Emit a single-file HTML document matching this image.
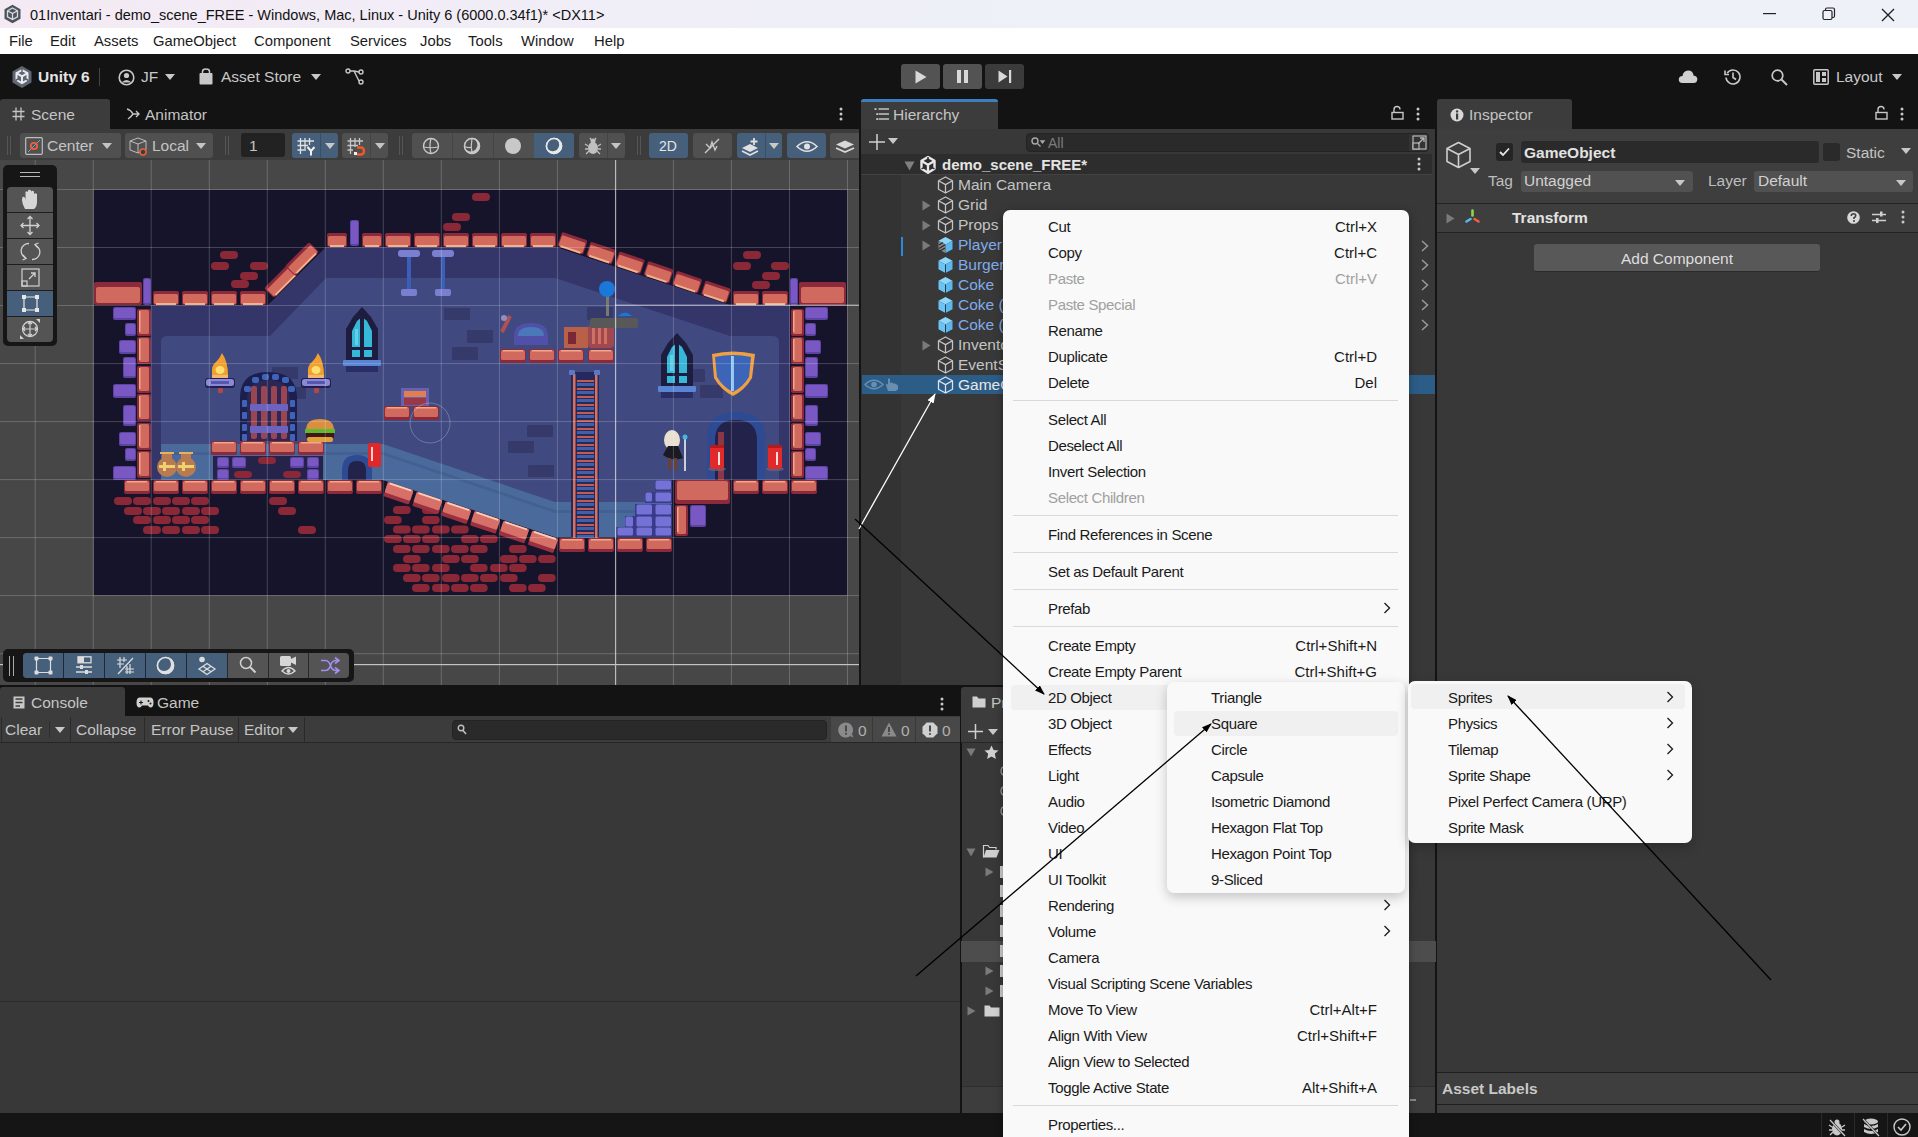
<!DOCTYPE html>
<html><head><meta charset="utf-8">
<style>
*{box-sizing:border-box;margin:0;padding:0}
html,body{width:1918px;height:1137px;overflow:hidden;background:#131313;font-family:"Liberation Sans",sans-serif;}
.a{position:absolute}
.t{position:absolute;white-space:nowrap;line-height:1}
svg{position:absolute;overflow:visible}
#title{left:0;top:0;width:1918px;height:28px;background:linear-gradient(90deg,#f4eaf4 0%,#f1edf6 25%,#eef0f7 50%,#eef2f8 100%)}
#menubar{left:0;top:28px;width:1918px;height:26px;background:#fff}
#toolbar{left:0;top:54px;width:1918px;height:44px;background:#131313}
.mtxt{font-size:14.8px;color:#1b1b1b}
.ltxt{color:#c4c4c4;font-size:15.5px}
.btn{position:absolute;background:#585858;border-radius:3px}
.bb{position:absolute;background:#46607c;}
.bg{position:absolute;background:#515151;}
.cm{position:absolute;font-size:15px;letter-spacing:-0.35px;color:#1a1a1a;white-space:nowrap;line-height:1;margin-top:1px}

.sc{position:absolute;font-size:15px;color:#1a1a1a;white-space:nowrap;line-height:1;text-align:right;margin-top:1px}
.sep{position:absolute;height:1px;background:#d9d9d9}
.cm.cmd,.sc.cmd{color:#a0a0a0}
.hrow{position:absolute;font-size:15.5px;color:#d2d2d2;white-space:nowrap;line-height:1}
.hb{color:#7cc3f5}
</style></head><body>

<!-- TITLE BAR -->
<div id="title" class="a"></div>
<div class="t" style="left:30px;top:8px;font-size:14.5px;color:#111">01Inventari - demo_scene_FREE - Windows, Mac, Linux - Unity 6 (6000.0.34f1)* &lt;DX11&gt;</div>
<svg style="left:3px;top:4px" width="19" height="20" viewBox="0 0 19 20"><path d="M9.5 0.8 L17.5 5.3 V14.7 L9.5 19.2 L1.5 14.7 V5.3Z" fill="#4d535c"/><path d="M9.5 4 L14.5 6.8 V12.8 L9.5 15.6 L4.5 12.8 V6.8Z M4.5 6.8 L9.5 9.6 L14.5 6.8 M9.5 9.6 V15.6" fill="none" stroke="#d8dce2" stroke-width="1.3"/></svg>
<svg style="left:1763px;top:13px" width="14" height="2"><rect width="13" height="1.2" fill="#222"/></svg>
<svg style="left:1822px;top:7px" width="14" height="14" viewBox="0 0 14 14"><rect x="1" y="3.5" width="9" height="9" rx="1.5" fill="none" stroke="#222" stroke-width="1.2"/><path d="M3.5 3.5 V2.5 Q3.5 1 5 1 H11 Q12.5 1 12.5 2.5 V9 Q12.5 10.5 11 10.5 H10" fill="none" stroke="#222" stroke-width="1.2"/></svg>
<svg style="left:1881px;top:8px" width="14" height="14" viewBox="0 0 14 14"><path d="M1 1 L13 13 M13 1 L1 13" stroke="#222" stroke-width="1.4"/></svg>

<!-- MENU BAR -->
<div id="menubar" class="a"></div>
<div class="t mtxt" style="left:9px;top:34px">File</div>
<div class="t mtxt" style="left:50px;top:34px">Edit</div>
<div class="t mtxt" style="left:94px;top:34px">Assets</div>
<div class="t mtxt" style="left:153px;top:34px">GameObject</div>
<div class="t mtxt" style="left:254px;top:34px">Component</div>
<div class="t mtxt" style="left:350px;top:34px">Services</div>
<div class="t mtxt" style="left:420px;top:34px">Jobs</div>
<div class="t mtxt" style="left:468px;top:34px">Tools</div>
<div class="t mtxt" style="left:521px;top:34px">Window</div>
<div class="t mtxt" style="left:594px;top:34px">Help</div>

<!-- MAIN TOOLBAR -->
<div id="toolbar" class="a"></div>


<!-- MAIN TOOLBAR CONTENT -->
<svg style="left:11px;top:65px" width="22" height="24" viewBox="0 0 22 24"><path d="M11 1 L20.5 6.5 V17.5 L11 23 L1.5 17.5 V6.5Z" fill="#5e6570"/><path d="M11 5 L16.5 8.2 V15 L11 18.2 L5.5 15 V8.2Z M5.5 8.2 L11 11.4 L16.5 8.2 M11 11.4 V18.2" fill="none" stroke="#e8ebef" stroke-width="2" stroke-linejoin="round"/><path d="M11 4 V7 M4.5 15.5 L7 14 M17.5 15.5 L15 14" stroke="#5e6570" stroke-width="1.5"/></svg>
<div class="t" style="left:38px;top:69px;font-size:15.5px;font-weight:bold;color:#e4e4e4">Unity 6</div>
<div class="a" style="left:99px;top:68px;width:1px;height:18px;background:#444"></div>
<svg style="left:118px;top:69px" width="17" height="17" viewBox="0 0 17 17"><circle cx="8.5" cy="8.5" r="7.3" fill="none" stroke="#c8c8c8" stroke-width="1.6"/><circle cx="8.5" cy="6.5" r="2.6" fill="#c8c8c8"/><path d="M3.5 13.5 Q8.5 8.5 13.5 13.5" fill="#c8c8c8"/></svg>
<div class="t" style="left:141px;top:69px;font-size:15.5px;color:#c8c8c8">JF</div>
<svg style="left:165px;top:74px" width="10" height="6"><path d="M0 0 H10 L5 6Z" fill="#c8c8c8"/></svg>
<svg style="left:199px;top:68px" width="14" height="17" viewBox="0 0 14 17"><rect x="0.5" y="5" width="13" height="11.5" rx="1" fill="#c8c8c8"/><path d="M3.5 6 V3.5 Q3.5 1 7 1 Q10.5 1 10.5 3.5 V6" fill="none" stroke="#c8c8c8" stroke-width="1.5"/></svg>
<div class="t" style="left:221px;top:69px;font-size:15.5px;color:#c8c8c8">Asset Store</div>
<svg style="left:311px;top:74px" width="10" height="6"><path d="M0 0 H10 L5 6Z" fill="#c8c8c8"/></svg>
<svg style="left:345px;top:68px" width="19" height="17" viewBox="0 0 19 17"><circle cx="3" cy="3" r="2" fill="none" stroke="#c8c8c8" stroke-width="1.4"/><circle cx="16" cy="4" r="2" fill="none" stroke="#c8c8c8" stroke-width="1.4"/><circle cx="16" cy="14" r="2" fill="none" stroke="#c8c8c8" stroke-width="1.4"/><path d="M5 3 H9 L14 4 M9 3 L14 13" fill="none" stroke="#c8c8c8" stroke-width="1.4"/></svg>

<div class="btn" style="left:901px;top:64px;width:39px;height:25px;background:#535353"></div>
<div class="btn" style="left:943px;top:64px;width:39px;height:25px;background:#535353"></div>
<div class="btn" style="left:985px;top:64px;width:39px;height:25px;background:#3b3b3b"></div>
<svg style="left:915px;top:70px" width="12" height="14"><path d="M0.5 0.5 L11.5 7 L0.5 13.5Z" fill="#d8d8d8"/></svg>
<svg style="left:957px;top:70px" width="12" height="13"><rect x="0" y="0" width="4" height="13" fill="#d8d8d8"/><rect x="7" y="0" width="4" height="13" fill="#d8d8d8"/></svg>
<svg style="left:998px;top:70px" width="14" height="13"><path d="M0.5 0.5 L9.5 6.5 L0.5 12.5Z" fill="#d8d8d8"/><rect x="11" y="0" width="2.2" height="13" fill="#d8d8d8"/></svg>

<svg style="left:1678px;top:69px" width="20" height="15" viewBox="0 0 20 15"><path d="M4.5 14 Q0.5 14 0.8 10 Q1.2 7 4.5 7 Q5 2 10 1.5 Q15 1.5 15.5 6.5 Q19.5 7 19.3 10.5 Q19 14 15.5 14Z" fill="#d0d0d0"/></svg>
<svg style="left:1724px;top:68px" width="18" height="18" viewBox="0 0 18 18"><path d="M3.2 5 A7 7 0 1 1 2 9.5" fill="none" stroke="#c8c8c8" stroke-width="1.6"/><path d="M1 2.5 V6.5 H5" fill="none" stroke="#c8c8c8" stroke-width="1.6"/><path d="M9 4.5 V9.5 L12 11.5" fill="none" stroke="#c8c8c8" stroke-width="1.6"/></svg>
<svg style="left:1771px;top:69px" width="17" height="17" viewBox="0 0 17 17"><circle cx="6.5" cy="6.5" r="5.3" fill="none" stroke="#c8c8c8" stroke-width="1.7"/><path d="M10.5 10.5 L16 16" stroke="#c8c8c8" stroke-width="2"/></svg>
<svg style="left:1813px;top:69px" width="16" height="16" viewBox="0 0 16 16"><rect x="0.8" y="0.8" width="14.4" height="14.4" rx="1" fill="none" stroke="#c8c8c8" stroke-width="1.5"/><rect x="3" y="3" width="4" height="10" fill="#c8c8c8"/><rect x="9" y="3" width="4" height="4" fill="#c8c8c8"/><rect x="9" y="9" width="4" height="4" fill="#c8c8c8"/></svg>
<div class="t" style="left:1836px;top:69px;font-size:15.5px;color:#c8c8c8">Layout</div>
<svg style="left:1892px;top:74px" width="10" height="6"><path d="M0 0 H10 L5 6Z" fill="#c8c8c8"/></svg>


<!-- SCENE PANEL -->
<div class="a" style="left:0;top:99px;width:110px;height:31px;background:#3c3c3c;border-radius:3px 3px 0 0"></div>
<svg style="left:12px;top:107px" width="13" height="14" viewBox="0 0 13 14"><path d="M4 0.5 V13.5 M9 0.5 V13.5 M0.5 4.5 H12.5 M0.5 9.5 H12.5" stroke="#c4c4c4" stroke-width="1.3"/></svg>
<div class="t ltxt" style="left:31px;top:107px;font-size:15.5px;color:#c4c4c4">Scene</div>
<svg style="left:126px;top:108px" width="14" height="12" viewBox="0 0 14 12"><path d="M1 1 Q5 2 7 6 L13 6 M10 3 L13 6 L10 9 M7 6 Q5 9 2 11" fill="none" stroke="#c4c4c4" stroke-width="1.4"/></svg>
<div class="t ltxt" style="left:145px;top:107px;font-size:15.5px;color:#c4c4c4">Animator</div>
<svg style="left:839px;top:107px" width="4" height="14"><circle cx="2" cy="2" r="1.5" fill="#c8c8c8"/><circle cx="2" cy="7" r="1.5" fill="#c8c8c8"/><circle cx="2" cy="12" r="1.5" fill="#c8c8c8"/></svg>
<div class="a" style="left:0;top:129px;width:859px;height:31px;background:#3c3c3c"></div>
<div class="a" style="left:7px;top:136px;width:1px;height:19px;background:#555"></div><div class="a" style="left:10px;top:136px;width:1px;height:19px;background:#555"></div>
<div class="btn" style="left:20px;top:133px;width:101px;height:25px;background:#505050"></div>
<svg style="left:25px;top:137px" width="18" height="18" viewBox="0 0 18 18"><rect x="0.7" y="0.7" width="16.6" height="16.6" rx="1" fill="none" stroke="#bdbdbd" stroke-width="1.2"/><path d="M3 15 L15 3" stroke="#8aa0c0" stroke-width="1"/><circle cx="9" cy="9" r="3.2" fill="none" stroke="#e8603c" stroke-width="1.8"/></svg>
<div class="t ltxt" style="left:47px;top:138px">Center</div>
<svg style="left:102px;top:143px" width="10" height="6"><path d="M0 0 H10 L5 6Z" fill="#c4c4c4"/></svg>
<div class="btn" style="left:125px;top:133px;width:88px;height:25px;background:#505050"></div>
<svg style="left:129px;top:137px" width="20" height="20" viewBox="0 0 20 20"><path d="M9 1 L17 4 L17 13 L9 16 L1 13 L1 4Z M1 4 L9 7 L17 4 M9 7 V16" fill="none" stroke="#bdbdbd" stroke-width="1"/><circle cx="14" cy="15" r="3" fill="#3c3c3c" stroke="#e8603c" stroke-width="1.6"/></svg>
<div class="t ltxt" style="left:152px;top:138px">Local</div>
<svg style="left:196px;top:143px" width="10" height="6"><path d="M0 0 H10 L5 6Z" fill="#c4c4c4"/></svg>
<div class="a" style="left:225px;top:136px;width:1px;height:19px;background:#555"></div><div class="a" style="left:228px;top:136px;width:1px;height:19px;background:#555"></div>
<div class="a" style="left:241px;top:133px;width:44px;height:24px;background:#222;border-radius:3px"></div>
<div class="t ltxt" style="left:249px;top:138px">1</div>
<div class="a" style="left:292px;top:133px;width:46px;height:25px;background:#46607c;border-radius:3px"></div>
<div class="a" style="left:320px;top:133px;width:1px;height:25px;background:#3a4e66"></div>
<svg style="left:297px;top:137px" width="20" height="19" viewBox="0 0 20 19"><path d="M3.5 1 V17 M8 1 V12 M12.5 1 V8 M0.5 4 H17 M0.5 8.5 H11 M0.5 13 H9" fill="none" stroke="#e0e0e0" stroke-width="1.3"/><path d="M10.5 10 L14 14 L17.5 10 M14 14 V18.5" fill="none" stroke="#f0f0f0" stroke-width="2"/></svg>
<svg style="left:325px;top:143px" width="10" height="6"><path d="M0 0 H10 L5 6Z" fill="#c8c8c8"/></svg>
<div class="btn" style="left:342px;top:133px;width:46px;height:25px;background:#505050"></div>
<div class="a" style="left:370px;top:133px;width:1px;height:25px;background:#444"></div>
<svg style="left:347px;top:137px" width="20" height="19" viewBox="0 0 20 19"><path d="M3.5 1 V17 M8 1 V10 M12.5 1 V8 M0.5 4 H16 M0.5 8.5 H11 M0.5 13 H6" fill="none" stroke="#c8c8c8" stroke-width="1.3"/><rect x="7" y="15" width="3" height="3" fill="#f0f0f0"/><path d="M10 10.5 H13.5 Q17 10.5 17 14 Q17 17.5 13.5 17.5 H10" fill="none" stroke="#f05a28" stroke-width="2.4"/></svg>
<svg style="left:375px;top:143px" width="10" height="6"><path d="M0 0 H10 L5 6Z" fill="#c4c4c4"/></svg>
<div class="a" style="left:399px;top:136px;width:1px;height:19px;background:#555"></div><div class="a" style="left:402px;top:136px;width:1px;height:19px;background:#555"></div>
<div class="btn" style="left:412px;top:133px;width:162px;height:25px;background:#505050"></div>
<div class="a" style="left:534px;top:133px;width:40px;height:25px;background:#46607c;border-radius:0 3px 3px 0"></div>
<div class="a" style="left:452px;top:133px;width:1px;height:25px;background:#444"></div>
<div class="a" style="left:493px;top:133px;width:1px;height:25px;background:#444"></div>
<svg style="left:422px;top:137px" width="18" height="18" viewBox="0 0 18 18"><circle cx="9" cy="9" r="7.5" fill="none" stroke="#c8c8c8" stroke-width="1.4"/><path d="M1.5 10 Q9 11.5 16.5 10 M9 1.5 Q7 9 9 16.5" fill="none" stroke="#c8c8c8" stroke-width="1.2"/></svg>
<svg style="left:463px;top:137px" width="18" height="18" viewBox="0 0 18 18"><circle cx="9" cy="9" r="7.5" fill="none" stroke="#c8c8c8" stroke-width="1.4"/><path d="M1.5 9.5 Q5 11 9 10.5 M9 1.5 Q7.5 9 9 16" fill="none" stroke="#c8c8c8" stroke-width="1.2"/><circle cx="9" cy="9" r="7.5" fill="#c8c8c8"/><circle cx="7.8" cy="7.8" r="6.6" fill="#505050"/><circle cx="9" cy="9" r="7.5" fill="none" stroke="#c8c8c8" stroke-width="1.4"/><path d="M1.5 9.5 Q5 11 9 10.5 M9 1.5 Q7.5 9 9 16" fill="none" stroke="#c8c8c8" stroke-width="1.2"/></svg>
<svg style="left:504px;top:137px" width="18" height="18"><circle cx="9" cy="9" r="8" fill="#c8c8c8"/></svg>
<svg style="left:545px;top:137px" width="18" height="18" viewBox="0 0 18 18"><circle cx="9" cy="9" r="7.5" fill="none" stroke="#e8e8e8" stroke-width="1.6"/><circle cx="9" cy="9" r="7.5" fill="#e8e8e8"/><circle cx="7.7" cy="7.7" r="6.5" fill="#46607c"/><circle cx="9" cy="9" r="7.5" fill="none" stroke="#e8e8e8" stroke-width="1.6"/></svg>
<div class="btn" style="left:579px;top:133px;width:46px;height:25px;background:#505050"></div>
<div class="a" style="left:607px;top:133px;width:1px;height:25px;background:#444"></div>
<svg style="left:584px;top:137px" width="18" height="18" viewBox="0 0 18 18"><ellipse cx="9" cy="11" rx="5" ry="6" fill="#c0c0c0"/><circle cx="9" cy="4" r="2.5" fill="#c0c0c0"/><path d="M1 7 L4 9 M1 12 H4 M2 17 L5 14 M17 7 L14 9 M17 12 H14 M16 17 L13 14 M6 1 L7.5 3 M12 1 L10.5 3" stroke="#c0c0c0" stroke-width="1.3"/></svg>
<svg style="left:611px;top:143px" width="10" height="6"><path d="M0 0 H10 L5 6Z" fill="#c4c4c4"/></svg>
<div class="a" style="left:637px;top:136px;width:1px;height:19px;background:#555"></div><div class="a" style="left:640px;top:136px;width:1px;height:19px;background:#555"></div>
<div class="a" style="left:649px;top:133px;width:39px;height:25px;background:#46607c;border-radius:3px"></div>
<div class="t" style="left:659px;top:139px;font-size:14px;color:#e6e6e6">2D</div>
<div class="btn" style="left:693px;top:133px;width:39px;height:25px;background:#505050"></div>
<svg style="left:703px;top:137px" width="18" height="18" viewBox="0 0 18 18"><path d="M2 16 L16 2" stroke="#c8c8c8" stroke-width="1.4"/><path d="M3 7 L7 11 L9 5 L12 13 L14 9" fill="none" stroke="#c8c8c8" stroke-width="1.4"/></svg>
<div class="a" style="left:737px;top:133px;width:45px;height:25px;background:#46607c;border-radius:3px"></div>
<div class="a" style="left:765px;top:133px;width:1px;height:25px;background:#3a4e66"></div>
<svg style="left:741px;top:137px" width="20" height="18" viewBox="0 0 20 18"><path d="M1 11 L9 7 L17 11 L9 15Z" fill="#e0e0e0"/><path d="M1 14 L9 18 L17 14" fill="none" stroke="#e0e0e0" stroke-width="1.6"/><path d="M13 1 V8 M9.5 4.5 H16.5" stroke="#e0e0e0" stroke-width="1.8"/></svg>
<svg style="left:769px;top:143px" width="10" height="6"><path d="M0 0 H10 L5 6Z" fill="#c8c8c8"/></svg>
<div class="a" style="left:787px;top:133px;width:39px;height:25px;background:#46607c;border-radius:3px"></div>
<svg style="left:796px;top:140px" width="22" height="13" viewBox="0 0 22 13"><path d="M1 6.5 Q11 -3 21 6.5 Q11 16 1 6.5Z" fill="none" stroke="#e0e0e0" stroke-width="1.6"/><circle cx="11" cy="6.5" r="3" fill="#e0e0e0"/></svg>
<div class="btn" style="left:830px;top:133px;width:29px;height:25px;background:#505050;border-radius:3px 0 0 3px"></div>
<svg style="left:835px;top:140px" width="20" height="13" viewBox="0 0 20 13"><path d="M1 4.5 L10 0.5 L19 4.5 L10 8.5Z" fill="#d8d8d8"/><path d="M1 8 L10 12 L19 8" fill="none" stroke="#d8d8d8" stroke-width="1.8"/></svg>

<!-- SCENE VIEW -->
<div class="a" style="left:0;top:160px;width:859px;height:525px;background:#474747;overflow:hidden">
<svg id="sceneart" style="left:0;top:0" width="859" height="525" viewBox="0 160 859 525">
<rect x="94" y="190" width="753" height="405" fill="#16142a"/>
<polygon points="151,305 268,305 326,247 556,247 730,305 790,305 790,480 672,480 672,537 555,537 383,480 151,480" fill="#34366a"/>
<path d="M161,480 L161,342 Q161,336 167,336 L270,336 L326,278 L555,278 L730,336 L773,336 Q779,336 779,342 L779,480 L672,480 L672,537 L555,537 L383,480Z" fill="#404980"/>
<polygon points="161,444 383,444 555,502 672,502 672,537 555,537 383,480 161,480" fill="#4a6a9c"/>
<polygon points="161,452 383,452 555,510 672,510 672,513 555,513 383,455 161,455" fill="#3f5a8c" opacity="0.6"/>
<rect x="444" y="308" width="26" height="12" rx="1" fill="#363a6a"/>
<rect x="467" y="330" width="26" height="13" rx="1" fill="#363a6a"/>
<rect x="452" y="347" width="26" height="13" rx="1" fill="#363a6a"/>
<rect x="587" y="307" width="26" height="13" rx="1" fill="#363a6a"/>
<rect x="527" y="425" width="26" height="12" rx="1" fill="#363a6a"/>
<rect x="508" y="441" width="26" height="12" rx="1" fill="#363a6a"/>
<rect x="528" y="465" width="26" height="12" rx="1" fill="#363a6a"/>
<rect x="690" y="369" width="15" height="13" rx="1" fill="#363a6a"/>
<rect x="700" y="385" width="23" height="13" rx="1" fill="#363a6a"/>
<rect x="272" y="367" width="26" height="12" rx="1" fill="#363a6a"/>
<rect x="282" y="387" width="24" height="12" rx="1" fill="#363a6a"/>
<rect x="94" y="282" width="48" height="23" rx="2" fill="#8c2a3c"/><rect x="96" y="287" width="44" height="16" rx="2" fill="#d06a5e"/>
<rect x="143" y="278" width="8" height="27" rx="2" fill="#5d43a4"/>
<rect x="144" y="279" width="6" height="24" rx="1.5" fill="#7a58c4"/>
<rect x="153" y="291" width="26" height="14" rx="2" fill="#8c2a3c"/>
<rect x="154" y="294" width="24" height="10" rx="1.5" fill="#d36a5e"/>
<rect x="156" y="303" width="20" height="2" fill="#f2b28c"/>
<rect x="182" y="291" width="26" height="14" rx="2" fill="#8c2a3c"/>
<rect x="183" y="294" width="24" height="10" rx="1.5" fill="#d36a5e"/>
<rect x="185" y="303" width="20" height="2" fill="#f2b28c"/>
<rect x="211" y="291" width="26" height="14" rx="2" fill="#8c2a3c"/>
<rect x="212" y="294" width="24" height="10" rx="1.5" fill="#d36a5e"/>
<rect x="214" y="303" width="20" height="2" fill="#f2b28c"/>
<rect x="240" y="291" width="26" height="14" rx="2" fill="#8c2a3c"/>
<rect x="241" y="294" width="24" height="10" rx="1.5" fill="#d36a5e"/>
<rect x="243" y="303" width="20" height="2" fill="#f2b28c"/>
<rect x="220" y="251" width="18" height="8" rx="4" fill="#8a2838"/>
<rect x="211" y="262" width="18" height="8" rx="4" fill="#8a2838"/>
<rect x="250" y="262" width="18" height="8" rx="4" fill="#8a2838"/>
<rect x="240" y="272" width="18" height="8" rx="4" fill="#8a2838"/>
<rect x="231" y="280" width="18" height="8" rx="4" fill="#8a2838"/>
<g transform="translate(281,281) rotate(-45)"><rect x="-17.0" y="-7.0" width="34" height="14" rx="2" fill="#8c2a3c"/><rect x="-16.0" y="-4.0" width="32" height="10" rx="1.5" fill="#d36a5e"/><rect x="-14.0" y="5.0" width="28" height="2" fill="#f2b28c"/></g>
<g transform="translate(302,259) rotate(-45)"><rect x="-17.0" y="-7.0" width="34" height="14" rx="2" fill="#8c2a3c"/><rect x="-16.0" y="-4.0" width="32" height="10" rx="1.5" fill="#d36a5e"/><rect x="-14.0" y="5.0" width="28" height="2" fill="#f2b28c"/></g>
<rect x="327" y="233" width="20" height="14" rx="2" fill="#8c2a3c"/>
<rect x="328" y="236" width="18" height="10" rx="1.5" fill="#d36a5e"/>
<rect x="330" y="245" width="14" height="2" fill="#f2b28c"/>
<rect x="350" y="220" width="9" height="26" rx="2" fill="#5d43a4"/>
<rect x="351" y="221" width="7" height="23" rx="1.5" fill="#7a58c4"/>
<rect x="362" y="233" width="20" height="14" rx="2" fill="#8c2a3c"/>
<rect x="363" y="236" width="18" height="10" rx="1.5" fill="#d36a5e"/>
<rect x="365" y="245" width="14" height="2" fill="#f2b28c"/>
<rect x="385" y="233" width="26" height="14" rx="2" fill="#8c2a3c"/>
<rect x="386" y="236" width="24" height="10" rx="1.5" fill="#d36a5e"/>
<rect x="388" y="245" width="20" height="2" fill="#f2b28c"/>
<rect x="414" y="233" width="26" height="14" rx="2" fill="#8c2a3c"/>
<rect x="415" y="236" width="24" height="10" rx="1.5" fill="#d36a5e"/>
<rect x="417" y="245" width="20" height="2" fill="#f2b28c"/>
<rect x="443" y="233" width="26" height="14" rx="2" fill="#8c2a3c"/>
<rect x="444" y="236" width="24" height="10" rx="1.5" fill="#d36a5e"/>
<rect x="446" y="245" width="20" height="2" fill="#f2b28c"/>
<rect x="472" y="233" width="26" height="14" rx="2" fill="#8c2a3c"/>
<rect x="473" y="236" width="24" height="10" rx="1.5" fill="#d36a5e"/>
<rect x="475" y="245" width="20" height="2" fill="#f2b28c"/>
<rect x="501" y="233" width="26" height="14" rx="2" fill="#8c2a3c"/>
<rect x="502" y="236" width="24" height="10" rx="1.5" fill="#d36a5e"/>
<rect x="504" y="245" width="20" height="2" fill="#f2b28c"/>
<rect x="530" y="233" width="26" height="14" rx="2" fill="#8c2a3c"/>
<rect x="531" y="236" width="24" height="10" rx="1.5" fill="#d36a5e"/>
<rect x="533" y="245" width="20" height="2" fill="#f2b28c"/>
<rect x="472" y="193" width="18" height="8" rx="4" fill="#8a2838"/>
<rect x="452" y="213" width="18" height="8" rx="4" fill="#8a2838"/>
<rect x="443" y="223" width="18" height="8" rx="4" fill="#8a2838"/>
<g transform="translate(572.5,243.3) rotate(18.6)"><rect x="-13.5" y="-7.5" width="27" height="15" rx="2" fill="#8c2a3c"/><rect x="-12.5" y="-4.5" width="25" height="11" rx="1.5" fill="#d36a5e"/><rect x="-10.5" y="5.5" width="21" height="2" fill="#f2b28c"/></g>
<g transform="translate(601.2,253.0) rotate(18.6)"><rect x="-13.5" y="-7.5" width="27" height="15" rx="2" fill="#8c2a3c"/><rect x="-12.5" y="-4.5" width="25" height="11" rx="1.5" fill="#d36a5e"/><rect x="-10.5" y="5.5" width="21" height="2" fill="#f2b28c"/></g>
<g transform="translate(629.9,262.7) rotate(18.6)"><rect x="-13.5" y="-7.5" width="27" height="15" rx="2" fill="#8c2a3c"/><rect x="-12.5" y="-4.5" width="25" height="11" rx="1.5" fill="#d36a5e"/><rect x="-10.5" y="5.5" width="21" height="2" fill="#f2b28c"/></g>
<g transform="translate(658.6,272.40000000000003) rotate(18.6)"><rect x="-13.5" y="-7.5" width="27" height="15" rx="2" fill="#8c2a3c"/><rect x="-12.5" y="-4.5" width="25" height="11" rx="1.5" fill="#d36a5e"/><rect x="-10.5" y="5.5" width="21" height="2" fill="#f2b28c"/></g>
<g transform="translate(687.3,282.1) rotate(18.6)"><rect x="-13.5" y="-7.5" width="27" height="15" rx="2" fill="#8c2a3c"/><rect x="-12.5" y="-4.5" width="25" height="11" rx="1.5" fill="#d36a5e"/><rect x="-10.5" y="5.5" width="21" height="2" fill="#f2b28c"/></g>
<g transform="translate(716.0,291.8) rotate(18.6)"><rect x="-13.5" y="-7.5" width="27" height="15" rx="2" fill="#8c2a3c"/><rect x="-12.5" y="-4.5" width="25" height="11" rx="1.5" fill="#d36a5e"/><rect x="-10.5" y="5.5" width="21" height="2" fill="#f2b28c"/></g>
<rect x="733" y="291" width="26" height="14" rx="2" fill="#8c2a3c"/>
<rect x="734" y="294" width="24" height="10" rx="1.5" fill="#d36a5e"/>
<rect x="736" y="303" width="20" height="2" fill="#f2b28c"/>
<rect x="762" y="291" width="26" height="14" rx="2" fill="#8c2a3c"/>
<rect x="763" y="294" width="24" height="10" rx="1.5" fill="#d36a5e"/>
<rect x="765" y="303" width="20" height="2" fill="#f2b28c"/>
<rect x="790" y="278" width="8" height="27" rx="2" fill="#5d43a4"/>
<rect x="791" y="279" width="6" height="24" rx="1.5" fill="#7a58c4"/>
<rect x="799" y="282" width="47" height="23" rx="2" fill="#8c2a3c"/><rect x="801" y="287" width="43" height="16" rx="2" fill="#d06a5e"/>
<rect x="743" y="251" width="18" height="8" rx="4" fill="#8a2838"/>
<rect x="733" y="262" width="18" height="8" rx="4" fill="#8a2838"/>
<rect x="771" y="262" width="18" height="8" rx="4" fill="#8a2838"/>
<rect x="762" y="272" width="18" height="8" rx="4" fill="#8a2838"/>
<rect x="752" y="281" width="18" height="8" rx="4" fill="#8a2838"/>
<rect x="137" y="309" width="14" height="27" rx="2" fill="#8c2a3c"/>
<rect x="139" y="310" width="10" height="24" rx="1.5" fill="#d06a5e"/>
<rect x="139" y="311" width="1.5" height="21" fill="#f0a888"/>
<rect x="791" y="309" width="13" height="27" rx="2" fill="#8c2a3c"/>
<rect x="793" y="310" width="9" height="24" rx="1.5" fill="#d06a5e"/>
<rect x="793" y="311" width="1.5" height="21" fill="#f0a888"/>
<rect x="137" y="337" width="14" height="27" rx="2" fill="#8c2a3c"/>
<rect x="139" y="338" width="10" height="24" rx="1.5" fill="#d06a5e"/>
<rect x="139" y="339" width="1.5" height="21" fill="#f0a888"/>
<rect x="791" y="337" width="13" height="27" rx="2" fill="#8c2a3c"/>
<rect x="793" y="338" width="9" height="24" rx="1.5" fill="#d06a5e"/>
<rect x="793" y="339" width="1.5" height="21" fill="#f0a888"/>
<rect x="137" y="366" width="14" height="27" rx="2" fill="#8c2a3c"/>
<rect x="139" y="367" width="10" height="24" rx="1.5" fill="#d06a5e"/>
<rect x="139" y="368" width="1.5" height="21" fill="#f0a888"/>
<rect x="791" y="366" width="13" height="27" rx="2" fill="#8c2a3c"/>
<rect x="793" y="367" width="9" height="24" rx="1.5" fill="#d06a5e"/>
<rect x="793" y="368" width="1.5" height="21" fill="#f0a888"/>
<rect x="137" y="394" width="14" height="27" rx="2" fill="#8c2a3c"/>
<rect x="139" y="395" width="10" height="24" rx="1.5" fill="#d06a5e"/>
<rect x="139" y="396" width="1.5" height="21" fill="#f0a888"/>
<rect x="791" y="394" width="13" height="27" rx="2" fill="#8c2a3c"/>
<rect x="793" y="395" width="9" height="24" rx="1.5" fill="#d06a5e"/>
<rect x="793" y="396" width="1.5" height="21" fill="#f0a888"/>
<rect x="137" y="423" width="14" height="27" rx="2" fill="#8c2a3c"/>
<rect x="139" y="424" width="10" height="24" rx="1.5" fill="#d06a5e"/>
<rect x="139" y="425" width="1.5" height="21" fill="#f0a888"/>
<rect x="791" y="423" width="13" height="27" rx="2" fill="#8c2a3c"/>
<rect x="793" y="424" width="9" height="24" rx="1.5" fill="#d06a5e"/>
<rect x="793" y="425" width="1.5" height="21" fill="#f0a888"/>
<rect x="137" y="451" width="14" height="27" rx="2" fill="#8c2a3c"/>
<rect x="139" y="452" width="10" height="24" rx="1.5" fill="#d06a5e"/>
<rect x="139" y="453" width="1.5" height="21" fill="#f0a888"/>
<rect x="791" y="451" width="13" height="27" rx="2" fill="#8c2a3c"/>
<rect x="793" y="452" width="9" height="24" rx="1.5" fill="#d06a5e"/>
<rect x="793" y="453" width="1.5" height="21" fill="#f0a888"/>
<rect x="113" y="307" width="23" height="13" rx="2" fill="#5d43a4"/>
<rect x="114" y="308" width="21" height="10" rx="1.5" fill="#7a58c4"/>
<rect x="125" y="323" width="11" height="13" rx="2" fill="#5d43a4"/>
<rect x="126" y="324" width="9" height="10" rx="1.5" fill="#7a58c4"/>
<rect x="119" y="340" width="17" height="14" rx="2" fill="#5d43a4"/>
<rect x="120" y="341" width="15" height="11" rx="1.5" fill="#7a58c4"/>
<rect x="123" y="357" width="13" height="21" rx="2" fill="#5d43a4"/>
<rect x="124" y="358" width="11" height="18" rx="1.5" fill="#7a58c4"/>
<rect x="113" y="384" width="23" height="14" rx="2" fill="#5d43a4"/>
<rect x="114" y="385" width="21" height="11" rx="1.5" fill="#7a58c4"/>
<rect x="123" y="405" width="13" height="21" rx="2" fill="#5d43a4"/>
<rect x="124" y="406" width="11" height="18" rx="1.5" fill="#7a58c4"/>
<rect x="119" y="432" width="17" height="14" rx="2" fill="#5d43a4"/>
<rect x="120" y="433" width="15" height="11" rx="1.5" fill="#7a58c4"/>
<rect x="125" y="448" width="11" height="13" rx="2" fill="#5d43a4"/>
<rect x="126" y="449" width="9" height="10" rx="1.5" fill="#7a58c4"/>
<rect x="113" y="466" width="23" height="14" rx="2" fill="#5d43a4"/>
<rect x="114" y="467" width="21" height="11" rx="1.5" fill="#7a58c4"/>
<rect x="805" y="307" width="23" height="13" rx="2" fill="#5d43a4"/>
<rect x="806" y="308" width="21" height="10" rx="1.5" fill="#7a58c4"/>
<rect x="805" y="323" width="11" height="13" rx="2" fill="#5d43a4"/>
<rect x="806" y="324" width="9" height="10" rx="1.5" fill="#7a58c4"/>
<rect x="805" y="340" width="16" height="14" rx="2" fill="#5d43a4"/>
<rect x="806" y="341" width="14" height="11" rx="1.5" fill="#7a58c4"/>
<rect x="805" y="357" width="13" height="21" rx="2" fill="#5d43a4"/>
<rect x="806" y="358" width="11" height="18" rx="1.5" fill="#7a58c4"/>
<rect x="805" y="384" width="23" height="14" rx="2" fill="#5d43a4"/>
<rect x="806" y="385" width="21" height="11" rx="1.5" fill="#7a58c4"/>
<rect x="805" y="405" width="13" height="21" rx="2" fill="#5d43a4"/>
<rect x="806" y="406" width="11" height="18" rx="1.5" fill="#7a58c4"/>
<rect x="805" y="432" width="16" height="14" rx="2" fill="#5d43a4"/>
<rect x="806" y="433" width="14" height="11" rx="1.5" fill="#7a58c4"/>
<rect x="805" y="448" width="11" height="13" rx="2" fill="#5d43a4"/>
<rect x="806" y="449" width="9" height="10" rx="1.5" fill="#7a58c4"/>
<rect x="805" y="466" width="23" height="14" rx="2" fill="#5d43a4"/>
<rect x="806" y="467" width="21" height="11" rx="1.5" fill="#7a58c4"/>
<rect x="124" y="480" width="26" height="14" rx="2" fill="#8c2a3c"/>
<rect x="125" y="481" width="24" height="10" rx="1.5" fill="#d06a5e"/>
<rect x="127" y="481" width="20" height="1.5" fill="#f0a888"/>
<rect x="153" y="480" width="26" height="14" rx="2" fill="#8c2a3c"/>
<rect x="154" y="481" width="24" height="10" rx="1.5" fill="#d06a5e"/>
<rect x="156" y="481" width="20" height="1.5" fill="#f0a888"/>
<rect x="182" y="480" width="26" height="14" rx="2" fill="#8c2a3c"/>
<rect x="183" y="481" width="24" height="10" rx="1.5" fill="#d06a5e"/>
<rect x="185" y="481" width="20" height="1.5" fill="#f0a888"/>
<rect x="211" y="480" width="26" height="14" rx="2" fill="#8c2a3c"/>
<rect x="212" y="481" width="24" height="10" rx="1.5" fill="#d06a5e"/>
<rect x="214" y="481" width="20" height="1.5" fill="#f0a888"/>
<rect x="240" y="480" width="26" height="14" rx="2" fill="#8c2a3c"/>
<rect x="241" y="481" width="24" height="10" rx="1.5" fill="#d06a5e"/>
<rect x="243" y="481" width="20" height="1.5" fill="#f0a888"/>
<rect x="269" y="480" width="26" height="14" rx="2" fill="#8c2a3c"/>
<rect x="270" y="481" width="24" height="10" rx="1.5" fill="#d06a5e"/>
<rect x="272" y="481" width="20" height="1.5" fill="#f0a888"/>
<rect x="298" y="480" width="26" height="14" rx="2" fill="#8c2a3c"/>
<rect x="299" y="481" width="24" height="10" rx="1.5" fill="#d06a5e"/>
<rect x="301" y="481" width="20" height="1.5" fill="#f0a888"/>
<rect x="327" y="480" width="26" height="14" rx="2" fill="#8c2a3c"/>
<rect x="328" y="481" width="24" height="10" rx="1.5" fill="#d06a5e"/>
<rect x="330" y="481" width="20" height="1.5" fill="#f0a888"/>
<rect x="356" y="480" width="26" height="14" rx="2" fill="#8c2a3c"/>
<rect x="357" y="481" width="24" height="10" rx="1.5" fill="#d06a5e"/>
<rect x="359" y="481" width="20" height="1.5" fill="#f0a888"/>
<rect x="211" y="441" width="26" height="14" rx="2" fill="#8c2a3c"/>
<rect x="212" y="442" width="24" height="10" rx="1.5" fill="#d06a5e"/>
<rect x="214" y="442" width="20" height="1.5" fill="#f0a888"/>
<rect x="240" y="441" width="26" height="14" rx="2" fill="#8c2a3c"/>
<rect x="241" y="442" width="24" height="10" rx="1.5" fill="#d06a5e"/>
<rect x="243" y="442" width="20" height="1.5" fill="#f0a888"/>
<rect x="269" y="441" width="26" height="14" rx="2" fill="#8c2a3c"/>
<rect x="270" y="442" width="24" height="10" rx="1.5" fill="#d06a5e"/>
<rect x="272" y="442" width="20" height="1.5" fill="#f0a888"/>
<rect x="298" y="441" width="26" height="14" rx="2" fill="#8c2a3c"/>
<rect x="299" y="442" width="24" height="10" rx="1.5" fill="#d06a5e"/>
<rect x="301" y="442" width="20" height="1.5" fill="#f0a888"/>
<rect x="213" y="456" width="110" height="24" fill="#25234a"/>
<rect x="217" y="457" width="12" height="11" rx="2" fill="#5d43a4"/>
<rect x="218" y="458" width="10" height="8" rx="1.5" fill="#7a58c4"/>
<rect x="232" y="457" width="14" height="11" rx="2" fill="#5d43a4"/>
<rect x="233" y="458" width="12" height="8" rx="1.5" fill="#7a58c4"/>
<rect x="290" y="457" width="14" height="11" rx="2" fill="#5d43a4"/>
<rect x="291" y="458" width="12" height="8" rx="1.5" fill="#7a58c4"/>
<rect x="307" y="457" width="12" height="11" rx="2" fill="#5d43a4"/>
<rect x="308" y="458" width="10" height="8" rx="1.5" fill="#7a58c4"/>
<rect x="217" y="469" width="12" height="11" rx="2" fill="#5d43a4"/>
<rect x="218" y="470" width="10" height="8" rx="1.5" fill="#7a58c4"/>
<rect x="307" y="469" width="12" height="11" rx="2" fill="#5d43a4"/>
<rect x="308" y="470" width="10" height="8" rx="1.5" fill="#7a58c4"/>
<rect x="258" y="457" width="18" height="7" rx="4" fill="#8a2838"/>
<rect x="234" y="471" width="18" height="7" rx="4" fill="#8a2838"/>
<rect x="283" y="471" width="18" height="7" rx="4" fill="#8a2838"/>
<rect x="114" y="497" width="18" height="8" rx="4" fill="#8a2838"/>
<rect x="133" y="497" width="18" height="8" rx="4" fill="#8a2838"/>
<rect x="153" y="497" width="18" height="8" rx="4" fill="#8a2838"/>
<rect x="172" y="497" width="18" height="8" rx="4" fill="#8a2838"/>
<rect x="191" y="497" width="18" height="8" rx="4" fill="#8a2838"/>
<rect x="124" y="507" width="18" height="8" rx="4" fill="#8a2838"/>
<rect x="143" y="507" width="18" height="8" rx="4" fill="#8a2838"/>
<rect x="162" y="507" width="18" height="8" rx="4" fill="#8a2838"/>
<rect x="182" y="507" width="18" height="8" rx="4" fill="#8a2838"/>
<rect x="201" y="507" width="18" height="8" rx="4" fill="#8a2838"/>
<rect x="133" y="516" width="18" height="8" rx="4" fill="#8a2838"/>
<rect x="153" y="516" width="18" height="8" rx="4" fill="#8a2838"/>
<rect x="172" y="516" width="18" height="8" rx="4" fill="#8a2838"/>
<rect x="191" y="516" width="18" height="8" rx="4" fill="#8a2838"/>
<rect x="143" y="526" width="18" height="8" rx="4" fill="#8a2838"/>
<rect x="162" y="526" width="18" height="8" rx="4" fill="#8a2838"/>
<rect x="182" y="526" width="18" height="8" rx="4" fill="#8a2838"/>
<rect x="201" y="526" width="18" height="8" rx="4" fill="#8a2838"/>
<rect x="269" y="497" width="18" height="8" rx="4" fill="#8a2838"/>
<rect x="278" y="507" width="18" height="8" rx="4" fill="#8a2838"/>
<rect x="298" y="526" width="18" height="8" rx="4" fill="#8a2838"/>
<rect x="393" y="506" width="17.7" height="8" rx="4" fill="#8a2838"/>
<rect x="422" y="506" width="17.7" height="8" rx="4" fill="#8a2838"/>
<rect x="384" y="516" width="17.7" height="8" rx="4" fill="#8a2838"/>
<rect x="422" y="516" width="17.7" height="8" rx="4" fill="#8a2838"/>
<rect x="393" y="525.5" width="17.7" height="8" rx="4" fill="#8a2838"/>
<rect x="412" y="525.5" width="17.7" height="8" rx="4" fill="#8a2838"/>
<rect x="432" y="525.5" width="17.7" height="8" rx="4" fill="#8a2838"/>
<rect x="451" y="525.5" width="17.7" height="8" rx="4" fill="#8a2838"/>
<rect x="384" y="535" width="17.7" height="8" rx="4" fill="#8a2838"/>
<rect x="403" y="535" width="17.7" height="8" rx="4" fill="#8a2838"/>
<rect x="422" y="535" width="17.7" height="8" rx="4" fill="#8a2838"/>
<rect x="461" y="535" width="17.7" height="8" rx="4" fill="#8a2838"/>
<rect x="480" y="535" width="17.7" height="8" rx="4" fill="#8a2838"/>
<rect x="393" y="545" width="17.7" height="8" rx="4" fill="#8a2838"/>
<rect x="412" y="545" width="17.7" height="8" rx="4" fill="#8a2838"/>
<rect x="432" y="545" width="17.7" height="8" rx="4" fill="#8a2838"/>
<rect x="451" y="545" width="17.7" height="8" rx="4" fill="#8a2838"/>
<rect x="470" y="545" width="17.7" height="8" rx="4" fill="#8a2838"/>
<rect x="509" y="545" width="17.7" height="8" rx="4" fill="#8a2838"/>
<rect x="403" y="555" width="17.7" height="8" rx="4" fill="#8a2838"/>
<rect x="442" y="555" width="17.7" height="8" rx="4" fill="#8a2838"/>
<rect x="461" y="555" width="17.7" height="8" rx="4" fill="#8a2838"/>
<rect x="500" y="555" width="17.7" height="8" rx="4" fill="#8a2838"/>
<rect x="519" y="555" width="17.7" height="8" rx="4" fill="#8a2838"/>
<rect x="538" y="555" width="17.7" height="8" rx="4" fill="#8a2838"/>
<rect x="393" y="564" width="17.7" height="8" rx="4" fill="#8a2838"/>
<rect x="412" y="564" width="17.7" height="8" rx="4" fill="#8a2838"/>
<rect x="432" y="564" width="17.7" height="8" rx="4" fill="#8a2838"/>
<rect x="470" y="564" width="17.7" height="8" rx="4" fill="#8a2838"/>
<rect x="490" y="564" width="17.7" height="8" rx="4" fill="#8a2838"/>
<rect x="509" y="564" width="17.7" height="8" rx="4" fill="#8a2838"/>
<rect x="403" y="574" width="17.7" height="8" rx="4" fill="#8a2838"/>
<rect x="422" y="574" width="17.7" height="8" rx="4" fill="#8a2838"/>
<rect x="442" y="574" width="17.7" height="8" rx="4" fill="#8a2838"/>
<rect x="461" y="574" width="17.7" height="8" rx="4" fill="#8a2838"/>
<rect x="480" y="574" width="17.7" height="8" rx="4" fill="#8a2838"/>
<rect x="500" y="574" width="17.7" height="8" rx="4" fill="#8a2838"/>
<rect x="538" y="574" width="17.7" height="8" rx="4" fill="#8a2838"/>
<rect x="412" y="584" width="17.7" height="8" rx="4" fill="#8a2838"/>
<rect x="432" y="584" width="17.7" height="8" rx="4" fill="#8a2838"/>
<rect x="451" y="584" width="17.7" height="8" rx="4" fill="#8a2838"/>
<rect x="470" y="584" width="17.7" height="8" rx="4" fill="#8a2838"/>
<rect x="509" y="584" width="17.7" height="8" rx="4" fill="#8a2838"/>
<rect x="528" y="584" width="17.7" height="8" rx="4" fill="#8a2838"/>
<g transform="translate(398.4,493.3) rotate(18.6)"><rect x="-13.5" y="-7.5" width="27" height="15" rx="1.5" fill="#9a3040"/><rect x="-13.5" y="-7.5" width="27" height="11" rx="1.5" fill="#d8706a"/><rect x="-11.5" y="-7.5" width="23" height="1.8" fill="#f8d0b8"/></g>
<g transform="translate(427.29999999999995,503.0) rotate(18.6)"><rect x="-13.5" y="-7.5" width="27" height="15" rx="1.5" fill="#9a3040"/><rect x="-13.5" y="-7.5" width="27" height="11" rx="1.5" fill="#d8706a"/><rect x="-11.5" y="-7.5" width="23" height="1.8" fill="#f8d0b8"/></g>
<g transform="translate(456.2,512.7) rotate(18.6)"><rect x="-13.5" y="-7.5" width="27" height="15" rx="1.5" fill="#9a3040"/><rect x="-13.5" y="-7.5" width="27" height="11" rx="1.5" fill="#d8706a"/><rect x="-11.5" y="-7.5" width="23" height="1.8" fill="#f8d0b8"/></g>
<g transform="translate(485.09999999999997,522.4) rotate(18.6)"><rect x="-13.5" y="-7.5" width="27" height="15" rx="1.5" fill="#9a3040"/><rect x="-13.5" y="-7.5" width="27" height="11" rx="1.5" fill="#d8706a"/><rect x="-11.5" y="-7.5" width="23" height="1.8" fill="#f8d0b8"/></g>
<g transform="translate(514.0,532.1) rotate(18.6)"><rect x="-13.5" y="-7.5" width="27" height="15" rx="1.5" fill="#9a3040"/><rect x="-13.5" y="-7.5" width="27" height="11" rx="1.5" fill="#d8706a"/><rect x="-11.5" y="-7.5" width="23" height="1.8" fill="#f8d0b8"/></g>
<g transform="translate(542.9,541.8) rotate(18.6)"><rect x="-13.5" y="-7.5" width="27" height="15" rx="1.5" fill="#9a3040"/><rect x="-13.5" y="-7.5" width="27" height="11" rx="1.5" fill="#d8706a"/><rect x="-11.5" y="-7.5" width="23" height="1.8" fill="#f8d0b8"/></g>
<rect x="559" y="538" width="26" height="14" rx="2" fill="#8c2a3c"/>
<rect x="560" y="539" width="24" height="10" rx="1.5" fill="#d06a5e"/>
<rect x="562" y="539" width="20" height="1.5" fill="#f0a888"/>
<rect x="588" y="538" width="26" height="14" rx="2" fill="#8c2a3c"/>
<rect x="589" y="539" width="24" height="10" rx="1.5" fill="#d06a5e"/>
<rect x="591" y="539" width="20" height="1.5" fill="#f0a888"/>
<rect x="617" y="538" width="26" height="14" rx="2" fill="#8c2a3c"/>
<rect x="618" y="539" width="24" height="10" rx="1.5" fill="#d06a5e"/>
<rect x="620" y="539" width="20" height="1.5" fill="#f0a888"/>
<rect x="646" y="538" width="26" height="14" rx="2" fill="#8c2a3c"/>
<rect x="647" y="539" width="24" height="10" rx="1.5" fill="#d06a5e"/>
<rect x="649" y="539" width="20" height="1.5" fill="#f0a888"/>
<rect x="655" y="480" width="17" height="11" fill="#3a3a8a"/>
<rect x="655.5" y="480.5" width="15.5" height="9" rx="1.5" fill="#7472d4"/>
<rect x="645" y="492" width="27" height="11" fill="#3a3a8a"/>
<rect x="655.5" y="492.5" width="15.5" height="9" rx="1.5" fill="#7472d4"/>
<rect x="645.5" y="492.5" width="6.5" height="9" rx="1.5" fill="#7472d4"/>
<rect x="635" y="504" width="37" height="12" fill="#3a3a8a"/>
<rect x="655.5" y="504.5" width="15.5" height="10" rx="1.5" fill="#7472d4"/>
<rect x="636.5" y="504.5" width="15.5" height="10" rx="1.5" fill="#7472d4"/>
<rect x="625" y="516" width="47" height="12" fill="#3a3a8a"/>
<rect x="655.5" y="516.5" width="15.5" height="10" rx="1.5" fill="#7472d4"/>
<rect x="636.5" y="516.5" width="15.5" height="10" rx="1.5" fill="#7472d4"/>
<rect x="625.5" y="516.5" width="7.5" height="10" rx="1.5" fill="#7472d4"/>
<rect x="616" y="527" width="56" height="10" fill="#3a3a8a"/>
<rect x="655.5" y="527.5" width="15.5" height="8" rx="1.5" fill="#7472d4"/>
<rect x="636.5" y="527.5" width="15.5" height="8" rx="1.5" fill="#7472d4"/>
<rect x="617.5" y="527.5" width="15.5" height="8" rx="1.5" fill="#7472d4"/>
<rect x="675" y="480" width="55" height="24" rx="2" fill="#8c2a3c"/><rect x="677" y="481" width="51" height="19" rx="2" fill="#d06a5e"/>
<rect x="675" y="505" width="13" height="31" rx="2" fill="#8c2a3c"/>
<rect x="677" y="506" width="9" height="28" rx="1.5" fill="#d06a5e"/>
<rect x="677" y="507" width="1.5" height="25" fill="#f0a888"/>
<rect x="690" y="505" width="16" height="22" rx="2" fill="#5d43a4"/>
<rect x="691" y="506" width="14" height="19" rx="1.5" fill="#7a58c4"/>
<rect x="733" y="480" width="26" height="14" rx="2" fill="#8c2a3c"/>
<rect x="734" y="481" width="24" height="10" rx="1.5" fill="#d06a5e"/>
<rect x="736" y="481" width="20" height="1.5" fill="#f0a888"/>
<rect x="762" y="480" width="26" height="14" rx="2" fill="#8c2a3c"/>
<rect x="763" y="481" width="24" height="10" rx="1.5" fill="#d06a5e"/>
<rect x="765" y="481" width="20" height="1.5" fill="#f0a888"/>
<rect x="791" y="480" width="26" height="14" rx="2" fill="#8c2a3c"/>
<rect x="792" y="481" width="24" height="10" rx="1.5" fill="#d06a5e"/>
<rect x="794" y="481" width="20" height="1.5" fill="#f0a888"/>
<path d="M212,375 Q211,365 216,362 Q220,358 222,353 Q228,362 228,375Z" fill="#f0a030"/><ellipse cx="220" cy="370" rx="4.5" ry="4" fill="#fde070"/>
<rect x="212" y="375" width="16" height="3" fill="#f0b870"/><rect x="205" y="378" width="30" height="10" rx="3" fill="#22204a"/><rect x="206" y="379" width="28" height="7" rx="2.5" fill="#8a88d8"/><rect x="211" y="381" width="18" height="3" fill="#5a56b0"/><rect x="218" y="388" width="5" height="5" rx="1" fill="#b04848"/>
<path d="M308,375 Q307,365 312,362 Q316,358 318,353 Q324,362 324,375Z" fill="#f0a030"/><ellipse cx="316" cy="370" rx="4.5" ry="4" fill="#fde070"/>
<rect x="308" y="375" width="16" height="3" fill="#f0b870"/><rect x="301" y="378" width="30" height="10" rx="3" fill="#22204a"/><rect x="302" y="379" width="28" height="7" rx="2.5" fill="#8a88d8"/><rect x="307" y="381" width="18" height="3" fill="#5a56b0"/><rect x="314" y="388" width="5" height="5" rx="1" fill="#b04848"/>
<path d="M240,441 V398 Q240,372 268,372 Q297,372 297,398 V441Z" fill="#1c1f4e"/>
<path d="M247,441 V400 Q247,380 268,380 Q290,380 290,400 V441Z" fill="#2c2754"/>
<rect x="251" y="386" width="6" height="53" rx="2" fill="#9a4552"/>
<rect x="261" y="386" width="6" height="53" rx="2" fill="#9a4552"/>
<rect x="271" y="386" width="6" height="53" rx="2" fill="#9a4552"/>
<rect x="281" y="386" width="6" height="53" rx="2" fill="#9a4552"/>
<rect x="250" y="404" width="38" height="7" rx="1" fill="#6a64c0"/><rect x="250" y="426" width="38" height="7" rx="1" fill="#6a64c0"/>
<rect x="242" y="400" width="5" height="7" rx="1" fill="#3d64b8"/>
<rect x="242" y="412" width="5" height="7" rx="1" fill="#3d64b8"/>
<rect x="242" y="424" width="5" height="7" rx="1" fill="#3d64b8"/>
<rect x="242" y="434" width="5" height="7" rx="1" fill="#3d64b8"/>
<rect x="290" y="400" width="5" height="7" rx="1" fill="#3d64b8"/>
<rect x="290" y="412" width="5" height="7" rx="1" fill="#3d64b8"/>
<rect x="290" y="424" width="5" height="7" rx="1" fill="#3d64b8"/>
<rect x="290" y="434" width="5" height="7" rx="1" fill="#3d64b8"/>
<rect x="244" y="386" width="7" height="6" rx="2" fill="#3d64b8"/>
<rect x="252" y="377" width="7" height="6" rx="2" fill="#3d64b8"/>
<rect x="262" y="374" width="7" height="6" rx="2" fill="#3d64b8"/>
<rect x="272" y="374" width="7" height="6" rx="2" fill="#3d64b8"/>
<rect x="282" y="377" width="7" height="6" rx="2" fill="#3d64b8"/>
<rect x="288" y="386" width="7" height="6" rx="2" fill="#3d64b8"/>
<path d="M346,361 V329 L353,317 L362,307 L371,317 L378,329 V361Z" fill="#1e1d40"/>
<path d="M352,357 V331 L357,321 L362,317 L367,321 L372,331 V357Z" fill="#36b8d8"/>
<rect x="355" y="329" width="3" height="16" fill="#7ee0f0" opacity="0.6"/><rect x="360" y="315" width="4" height="46" fill="#1e1d40"/><rect x="352" y="347" width="20" height="3" fill="#1e1d40"/>
<rect x="343" y="360" width="38" height="6" rx="1" fill="#5a84d4"/><rect x="346" y="366" width="32" height="6" fill="#2a2e66"/>
<path d="M661,387 V355 L668,343 L677,333 L686,343 L693,355 V387Z" fill="#1e1d40"/>
<path d="M667,383 V357 L672,347 L677,343 L682,347 L687,357 V383Z" fill="#36b8d8"/>
<rect x="670" y="355" width="3" height="16" fill="#7ee0f0" opacity="0.6"/><rect x="675" y="341" width="4" height="46" fill="#1e1d40"/><rect x="667" y="373" width="20" height="3" fill="#1e1d40"/>
<rect x="658" y="386" width="38" height="6" rx="1" fill="#5a84d4"/><rect x="661" y="392" width="32" height="6" fill="#2a2e66"/>
<rect x="398" y="250" width="22" height="7" rx="3" fill="#7b7fd0"/><rect x="407" y="257" width="4" height="32" fill="#3a5fb8"/><rect x="401" y="289" width="16" height="7" rx="2" fill="#7b7fd0"/>
<rect x="432" y="250" width="22" height="7" rx="3" fill="#7b7fd0"/><rect x="441" y="257" width="4" height="32" fill="#3a5fb8"/><rect x="435" y="289" width="16" height="7" rx="2" fill="#7b7fd0"/>
<path d="M502,332 L510,316" stroke="#b05050" stroke-width="4"/><circle cx="504" cy="318" r="3" fill="#9090c0"/>
<path d="M514,345 V336 Q514,323 531,323 Q548,323 548,336 V345Z" fill="#5050a8"/><path d="M518,336 Q518,327 531,327 Q544,327 544,336Z" fill="#4a78b8"/>
<rect x="564" y="327" width="24" height="21" fill="#b86048"/><rect x="568" y="332" width="8" height="12" fill="#7a2838"/><rect x="588" y="325" width="26" height="23" rx="4" fill="#a04850"/>
<rect x="592" y="328" width="3" height="16" fill="#d07060"/>
<rect x="598" y="328" width="3" height="16" fill="#d07060"/>
<rect x="604" y="328" width="3" height="16" fill="#d07060"/>
<rect x="590" y="318" width="48" height="10" rx="2" fill="#585858"/><rect x="606" y="296" width="3" height="20" fill="#7a7a70"/><circle cx="607" cy="289" r="8" fill="#1a78d8"/><path d="M618,316 Q625,309 632,316Z" fill="#1a78d8"/>
<rect x="500" y="349" width="26" height="14" rx="2" fill="#8c2a3c"/>
<rect x="501" y="350" width="24" height="10" rx="1.5" fill="#d06a5e"/>
<rect x="503" y="350" width="20" height="1.5" fill="#f0a888"/>
<rect x="529" y="349" width="26" height="14" rx="2" fill="#8c2a3c"/>
<rect x="530" y="350" width="24" height="10" rx="1.5" fill="#d06a5e"/>
<rect x="532" y="350" width="20" height="1.5" fill="#f0a888"/>
<rect x="558" y="349" width="26" height="14" rx="2" fill="#8c2a3c"/>
<rect x="559" y="350" width="24" height="10" rx="1.5" fill="#d06a5e"/>
<rect x="561" y="350" width="20" height="1.5" fill="#f0a888"/>
<rect x="588" y="349" width="26" height="14" rx="2" fill="#8c2a3c"/>
<rect x="589" y="350" width="24" height="10" rx="1.5" fill="#d06a5e"/>
<rect x="591" y="350" width="20" height="1.5" fill="#f0a888"/>
<rect x="384" y="406" width="26" height="14" rx="2" fill="#8c2a3c"/>
<rect x="385" y="407" width="24" height="10" rx="1.5" fill="#d06a5e"/>
<rect x="387" y="407" width="20" height="1.5" fill="#f0a888"/>
<rect x="413" y="406" width="26" height="14" rx="2" fill="#8c2a3c"/>
<rect x="414" y="407" width="24" height="10" rx="1.5" fill="#d06a5e"/>
<rect x="416" y="407" width="20" height="1.5" fill="#f0a888"/>
<rect x="401" y="388" width="28" height="18" fill="#6a60b0"/><rect x="404" y="391" width="22" height="6" fill="#e08050"/><rect x="404" y="398" width="22" height="7" fill="#9a3848"/>
<circle cx="430" cy="423" r="20" fill="none" stroke="#ffffff" stroke-opacity="0.25" stroke-width="1"/>
<rect x="571" y="372" width="28" height="166" fill="#252a5e"/>
<rect x="573" y="374" width="2.5" height="164" fill="#d8705c"/><rect x="595" y="374" width="2.5" height="164" fill="#d8705c"/>
<rect x="577" y="380" width="17" height="2" fill="#c85a50"/><rect x="577" y="383" width="17" height="3" fill="#4060a8"/>
<rect x="577" y="388" width="17" height="2" fill="#c85a50"/><rect x="577" y="391" width="17" height="3" fill="#4060a8"/>
<rect x="577" y="396" width="17" height="2" fill="#c85a50"/><rect x="577" y="399" width="17" height="3" fill="#4060a8"/>
<rect x="577" y="404" width="17" height="2" fill="#c85a50"/><rect x="577" y="407" width="17" height="3" fill="#4060a8"/>
<rect x="577" y="412" width="17" height="2" fill="#c85a50"/><rect x="577" y="415" width="17" height="3" fill="#4060a8"/>
<rect x="577" y="420" width="17" height="2" fill="#c85a50"/><rect x="577" y="423" width="17" height="3" fill="#4060a8"/>
<rect x="577" y="428" width="17" height="2" fill="#c85a50"/><rect x="577" y="431" width="17" height="3" fill="#4060a8"/>
<rect x="577" y="436" width="17" height="2" fill="#c85a50"/><rect x="577" y="439" width="17" height="3" fill="#4060a8"/>
<rect x="577" y="444" width="17" height="2" fill="#c85a50"/><rect x="577" y="447" width="17" height="3" fill="#4060a8"/>
<rect x="577" y="452" width="17" height="2" fill="#c85a50"/><rect x="577" y="455" width="17" height="3" fill="#4060a8"/>
<rect x="577" y="460" width="17" height="2" fill="#c85a50"/><rect x="577" y="463" width="17" height="3" fill="#4060a8"/>
<rect x="577" y="468" width="17" height="2" fill="#c85a50"/><rect x="577" y="471" width="17" height="3" fill="#4060a8"/>
<rect x="577" y="476" width="17" height="2" fill="#c85a50"/><rect x="577" y="479" width="17" height="3" fill="#4060a8"/>
<rect x="577" y="484" width="17" height="2" fill="#c85a50"/><rect x="577" y="487" width="17" height="3" fill="#4060a8"/>
<rect x="577" y="492" width="17" height="2" fill="#c85a50"/><rect x="577" y="495" width="17" height="3" fill="#4060a8"/>
<rect x="577" y="500" width="17" height="2" fill="#c85a50"/><rect x="577" y="503" width="17" height="3" fill="#4060a8"/>
<rect x="577" y="508" width="17" height="2" fill="#c85a50"/><rect x="577" y="511" width="17" height="3" fill="#4060a8"/>
<rect x="577" y="516" width="17" height="2" fill="#c85a50"/><rect x="577" y="519" width="17" height="3" fill="#4060a8"/>
<rect x="577" y="524" width="17" height="2" fill="#c85a50"/><rect x="577" y="527" width="17" height="3" fill="#4060a8"/>
<rect x="577" y="532" width="17" height="2" fill="#c85a50"/><rect x="577" y="535" width="17" height="3" fill="#4060a8"/>
<rect x="569" y="370" width="6" height="5" rx="1" fill="#5a78c8"/><rect x="594" y="370" width="6" height="5" rx="1" fill="#5a78c8"/>
<path d="M712,354 Q733,349 755,354 L752,378 Q745,390 733,396 Q721,390 714,378Z" fill="#f0a040"/><path d="M715,357 Q733,353 751,357 L749,377 Q743,387 733,392 Q723,387 717,377Z" fill="#3c64b8"/><rect x="731" y="356" width="3" height="35" fill="#90c8f0"/>
<path d="M707,480 V438 Q707,412 736,412 Q765,412 765,438 V480Z" fill="#2e4a92"/><path d="M715,480 V440 Q715,420 736,420 Q757,420 757,440 V480Z" fill="#23224a"/>
<rect x="718" y="432" width="6" height="48" fill="#8a3848"/>
<ellipse cx="672" cy="440" rx="8" ry="10" fill="#e8e0d0"/><path d="M663,455 L668,446 H678 L683,458 Q673,462 663,455Z" fill="#1a1a22"/><rect x="668" y="458" width="3" height="12" fill="#6a4030"/><rect x="674" y="458" width="3" height="12" fill="#6a4030"/><rect x="684" y="438" width="2" height="33" fill="#c8d0e0"/><circle cx="685" cy="437" r="2.5" fill="#40b8e0"/>
<ellipse cx="717" cy="469" rx="9" ry="2" fill="#6a6a7a" opacity="0.7"/><rect x="710" y="445" width="14" height="24" rx="3" fill="#e22a2a"/><rect x="710" y="445" width="14" height="3" rx="1" fill="#b81818"/><rect x="718" y="452" width="2" height="13" fill="#ffe0e0"/>
<ellipse cx="775" cy="469" rx="9" ry="2" fill="#6a6a7a" opacity="0.7"/><rect x="768" y="445" width="14" height="24" rx="3" fill="#e22a2a"/><rect x="768" y="445" width="14" height="3" rx="1" fill="#b81818"/><rect x="776" y="452" width="2" height="13" fill="#ffe0e0"/>
<path d="M306,430 Q306,419 320,419 Q334,419 334,430Z" fill="#d89040"/><rect x="305" y="429" width="30" height="4" fill="#60b830"/><rect x="306" y="433" width="28" height="5" fill="#401818"/><rect x="307" y="437" width="26" height="5" rx="2" fill="#e0a040"/>
<ellipse cx="167" cy="467" rx="10" ry="10" fill="#b87a50"/><rect x="162" y="453" width="10" height="6" fill="#b87a50"/><rect x="160" y="452" width="14" height="2" fill="#e8b060"/><rect x="159" y="465" width="16" height="3" fill="#f0d070"/><rect x="163" y="462" width="3" height="9" fill="#f0d070"/>
<ellipse cx="186" cy="467" rx="10" ry="10" fill="#b87a50"/><rect x="181" y="453" width="10" height="6" fill="#b87a50"/><rect x="179" y="452" width="14" height="2" fill="#e8b060"/><rect x="178" y="465" width="16" height="3" fill="#f0d070"/><rect x="182" y="462" width="3" height="9" fill="#f0d070"/>
<path d="M342,480 V470 Q342,455 357,455 Q372,455 372,470 V480Z" fill="#2e4a92"/><path d="M348,480 V470 Q348,461 357,461 Q366,461 366,470 V480Z" fill="#23224a"/>
<rect x="368" y="443" width="13" height="24" rx="2" fill="#e02828"/><rect x="371" y="447" width="2" height="14" fill="#ffd0d0"/>
<rect x="34.7" y="160" width="1" height="525" fill="#ffffff" fill-opacity="0.2"/>
<rect x="92.7" y="160" width="1" height="525" fill="#ffffff" fill-opacity="0.2"/>
<rect x="150.7" y="160" width="1" height="525" fill="#ffffff" fill-opacity="0.2"/>
<rect x="208.8" y="160" width="1" height="525" fill="#ffffff" fill-opacity="0.2"/>
<rect x="266.8" y="160" width="1" height="525" fill="#ffffff" fill-opacity="0.2"/>
<rect x="324.8" y="160" width="1" height="525" fill="#ffffff" fill-opacity="0.2"/>
<rect x="382.8" y="160" width="1" height="525" fill="#ffffff" fill-opacity="0.2"/>
<rect x="440.8" y="160" width="1" height="525" fill="#ffffff" fill-opacity="0.2"/>
<rect x="498.9" y="160" width="1" height="525" fill="#ffffff" fill-opacity="0.2"/>
<rect x="556.9" y="160" width="1" height="525" fill="#ffffff" fill-opacity="0.2"/>
<rect x="614.9" y="160" width="1" height="525" fill="#ffffff" fill-opacity="0.2"/>
<rect x="672.9" y="160" width="1" height="525" fill="#ffffff" fill-opacity="0.2"/>
<rect x="730.9" y="160" width="1" height="525" fill="#ffffff" fill-opacity="0.2"/>
<rect x="789.0" y="160" width="1" height="525" fill="#ffffff" fill-opacity="0.2"/>
<rect x="847.0" y="160" width="1" height="525" fill="#ffffff" fill-opacity="0.2"/>
<rect x="0" y="189.0" width="859" height="1" fill="#ffffff" fill-opacity="0.2"/>
<rect x="0" y="247.0" width="859" height="1" fill="#ffffff" fill-opacity="0.2"/>
<rect x="0" y="305.0" width="859" height="1" fill="#ffffff" fill-opacity="0.2"/>
<rect x="0" y="363.1" width="859" height="1" fill="#ffffff" fill-opacity="0.2"/>
<rect x="0" y="421.1" width="859" height="1" fill="#ffffff" fill-opacity="0.2"/>
<rect x="0" y="479.1" width="859" height="1" fill="#ffffff" fill-opacity="0.2"/>
<rect x="0" y="537.1" width="859" height="1" fill="#ffffff" fill-opacity="0.2"/>
<rect x="0" y="595.1" width="859" height="1" fill="#ffffff" fill-opacity="0.2"/>
<rect x="0" y="653.2" width="859" height="1" fill="#ffffff" fill-opacity="0.2"/>
<rect x="615" y="160" width="1.2" height="525" fill="#ffffff" fill-opacity="0.55"/>
<rect x="615" y="304.6" width="244" height="1.2" fill="#ffffff" fill-opacity="0.55"/>
<rect x="0" y="664" width="859" height="1.2" fill="#c4c4c4"/>
</svg>
</div>


<!-- SCENE OVERLAYS -->
<div class="a" style="left:3px;top:165px;width:54px;height:181px;background:#161616;border-radius:5px"></div>
<div class="a" style="left:20px;top:172px;width:20px;height:1.3px;background:#b8b8b8"></div>
<div class="a" style="left:20px;top:176px;width:20px;height:1.3px;background:#b8b8b8"></div>
<div class="a" style="left:7px;top:187px;width:46px;height:155px;background:#545454;border-radius:4px 4px 4px 4px"></div>
<div class="a" style="left:7px;top:291px;width:46px;height:25px;background:#46607c"></div>
<div class="a" style="left:7px;top:212px;width:46px;height:1px;background:#1e1e1e"></div>
<div class="a" style="left:7px;top:238px;width:46px;height:1px;background:#1e1e1e"></div>
<div class="a" style="left:7px;top:264px;width:46px;height:1px;background:#1e1e1e"></div>
<div class="a" style="left:7px;top:290px;width:46px;height:1px;background:#1e1e1e"></div>
<div class="a" style="left:7px;top:316px;width:46px;height:1px;background:#1e1e1e"></div>
<svg style="left:21px;top:189px" width="19" height="21" viewBox="0 0 19 21"><path d="M4 20 Q1 15 1 11 L1.5 8 Q3 7 4 9 L4.5 11 V3 Q5.5 1.5 7 3 V9 V1.5 Q8.5 0 10 1.5 V9 V2.5 Q11.5 1 13 2.5 V10 V5 Q14.5 3.5 16 5 V13 Q16 18 13 20Z" fill="#d6d6d6"/></svg>
<svg style="left:20px;top:215px" width="20" height="21" viewBox="0 0 20 21"><path d="M10 1.5 V19.5 M1 10.5 H19 M7.5 4 L10 1.5 L12.5 4 M7.5 17 L10 19.5 L12.5 17 M3.5 8 L1 10.5 L3.5 13 M16.5 8 L19 10.5 L16.5 13" fill="none" stroke="#d0d0d0" stroke-width="1.3"/></svg>
<svg style="left:21px;top:242px" width="19" height="19" viewBox="0 0 19 19"><path d="M8 1.5 A7.5 7.5 0 0 0 5 16" fill="none" stroke="#d0d0d0" stroke-width="1.3"/><path d="M11 17.5 A7.5 7.5 0 0 0 14 3" fill="none" stroke="#d0d0d0" stroke-width="1.3"/><path d="M2 13 L5 16.5 L1.5 18 M17 6 L14 2.5 L17.5 1" fill="none" stroke="#d0d0d0" stroke-width="1.3"/></svg>
<svg style="left:21px;top:268px" width="19" height="19" viewBox="0 0 19 19"><rect x="1" y="1" width="17" height="17" fill="none" stroke="#d0d0d0" stroke-width="1.2"/><rect x="1" y="13" width="5" height="5" fill="none" stroke="#d0d0d0" stroke-width="1.2"/><path d="M8 11 L14 5 M10 5 H14 V9" fill="none" stroke="#d0d0d0" stroke-width="1.3"/></svg>
<svg style="left:21px;top:294px" width="19" height="19" viewBox="0 0 19 19"><path d="M4 3 H15 M4 16 H15 M3 4 V15 M16 4 V15" stroke="#e6e6e6" stroke-width="1.2"/><rect x="1" y="1" width="4" height="4" fill="#e6e6e6"/><rect x="14" y="1" width="4" height="4" fill="#e6e6e6"/><rect x="1" y="14" width="4" height="4" fill="#e6e6e6"/><rect x="14" y="14" width="4" height="4" fill="#e6e6e6"/></svg>
<svg style="left:20px;top:319px" width="20" height="20" viewBox="0 0 20 20"><circle cx="10" cy="10" r="7.5" fill="none" stroke="#d0d0d0" stroke-width="1.3"/><path d="M10 3 V17 M3 10 H17 M8 5 L10 3 L12 5 M8 15 L10 17 L12 15 M5 8 L3 10 L5 12 M15 8 L17 10 L15 12" fill="none" stroke="#d0d0d0" stroke-width="1.2"/><path d="M0 20 L0 16 L4 20Z M20 0 L16 0 L20 4Z" fill="#d0d0d0"/></svg>

<div class="a" style="left:3px;top:649px;width:351px;height:33px;background:#161616;border-radius:5px"></div>
<div class="a" style="left:9px;top:656px;width:1.3px;height:20px;background:#aaa"></div>
<div class="a" style="left:13px;top:656px;width:1.3px;height:20px;background:#aaa"></div>
<div class="a" style="left:23px;top:653px;width:326px;height:25px;background:#545454;border-radius:4px"></div>
<div class="a" style="left:23px;top:653px;width:204px;height:25px;background:#46607c;border-radius:4px 0 0 4px"></div>
<div class="a" style="left:63px;top:653px;width:1px;height:25px;background:#1e2a38"></div>
<div class="a" style="left:104px;top:653px;width:1px;height:25px;background:#1e2a38"></div>
<div class="a" style="left:145px;top:653px;width:1px;height:25px;background:#1e2a38"></div>
<div class="a" style="left:186px;top:653px;width:1px;height:25px;background:#1e2a38"></div>
<div class="a" style="left:227px;top:653px;width:1px;height:25px;background:#2a2a2a"></div>
<div class="a" style="left:268px;top:653px;width:1px;height:25px;background:#2a2a2a"></div>
<div class="a" style="left:308px;top:653px;width:1px;height:25px;background:#2a2a2a"></div>
<svg style="left:34px;top:656px" width="19" height="19" viewBox="0 0 19 19"><path d="M4 2.5 H15 M4 16.5 H15 M2.5 4 V15 M16.5 4 V15" stroke="#dcdcdc" stroke-width="1.2"/><rect x="0.5" y="0.5" width="4" height="4" rx="1" fill="#dcdcdc"/><rect x="14.5" y="0.5" width="4" height="4" rx="1" fill="#dcdcdc"/><rect x="0.5" y="14.5" width="4" height="4" rx="1" fill="#dcdcdc"/><rect x="14.5" y="14.5" width="4" height="4" rx="1" fill="#dcdcdc"/></svg>
<svg style="left:75px;top:656px" width="18" height="19" viewBox="0 0 18 19"><rect x="3" y="0.8" width="13" height="6" fill="none" stroke="#dcdcdc" stroke-width="1.3"/><rect x="3" y="0.8" width="6" height="6" fill="#dcdcdc"/><path d="M1 11 H17 M1 16 H17" stroke="#dcdcdc" stroke-width="1.3"/><rect x="5" y="9" width="3" height="4" fill="#dcdcdc"/><rect x="10" y="14" width="3" height="4" fill="#dcdcdc"/></svg>
<svg style="left:115px;top:656px" width="20" height="19" viewBox="0 0 20 19"><path d="M2 4 H12 M2 8 H9 M5 1 V12 M9 1 V6 M3 18 L18 2 M12 10 V18 M15 8 V18 M10 13 H19 M10 16 H19" fill="none" stroke="#dcdcdc" stroke-width="1.2"/></svg>
<svg style="left:156px;top:656px" width="19" height="19" viewBox="0 0 19 19"><circle cx="9.5" cy="9.5" r="8" fill="none" stroke="#e0e0e0" stroke-width="1.6"/><circle cx="9.5" cy="9.5" r="8" fill="#e0e0e0"/><circle cx="8.1" cy="8.1" r="6.9" fill="#46607c"/><circle cx="9.5" cy="9.5" r="8" fill="none" stroke="#e0e0e0" stroke-width="1.6"/></svg>
<svg style="left:197px;top:656px" width="20" height="20" viewBox="0 0 20 20"><circle cx="5" cy="3.5" r="2.8" fill="#dcdcdc"/><path d="M2 13 L10 7.5 L18 13 L10 18.5Z M6 10.2 L14 15.8 M14 10.2 L6 15.8" fill="none" stroke="#dcdcdc" stroke-width="1.3"/></svg>
<svg style="left:239px;top:656px" width="18" height="18" viewBox="0 0 18 18"><circle cx="7" cy="7" r="5.5" fill="none" stroke="#d0d0d0" stroke-width="1.5"/><path d="M11 11 L16.5 16.5" stroke="#d0d0d0" stroke-width="2"/></svg>
<svg style="left:279px;top:655px" width="19" height="21" viewBox="0 0 19 21"><rect x="1" y="1" width="11" height="10" rx="1.5" fill="#d6d6d6"/><path d="M12 4 L17 1.5 V10 L12 7.5Z" fill="#d6d6d6"/><path d="M3 16 Q9.5 9 16 16 Q9.5 22 3 16Z" fill="none" stroke="#d6d6d6" stroke-width="1.4"/><circle cx="9.5" cy="16" r="2" fill="#d6d6d6"/></svg>
<svg style="left:320px;top:657px" width="20" height="17" viewBox="0 0 20 17"><path d="M1 3.5 H5 Q9 3.5 10.5 8.5 Q12 13.5 16 13.5 H19 M1 13.5 H5 Q9 13.5 10.5 8.5 Q12 3.5 16 3.5 H19 M15 0.5 L19 3.5 L15 6.5 M15 10.5 L19 13.5 L15 16.5" fill="none" stroke="#a58cf0" stroke-width="1.6"/></svg>


<!-- HIERARCHY -->
<div class="a" style="left:861px;top:129px;width:574px;height:556px;background:#383838"></div>
<div class="a" style="left:861px;top:174px;width:40px;height:511px;background:#333333"></div>
<div class="a" style="left:861px;top:99px;width:137px;height:30px;background:#3c3c3c;border-radius:3px 3px 0 0"></div>
<div class="a" style="left:861px;top:99px;width:137px;height:3px;background:#3d7fc1;border-radius:3px 3px 0 0"></div>
<svg style="left:874px;top:108px" width="15" height="12" viewBox="0 0 15 12"><path d="M4.5 1 H15 M4.5 6 H15 M4.5 11 H15" stroke="#c4c4c4" stroke-width="1.4"/><rect x="0.5" y="0.2" width="2" height="1.8" fill="#c4c4c4"/><rect x="2.2" y="5.2" width="1.8" height="1.8" fill="#c4c4c4"/><rect x="2.2" y="10.2" width="1.8" height="1.8" fill="#c4c4c4"/></svg>
<div class="t ltxt" style="left:893px;top:107px">Hierarchy</div>
<svg style="left:1391px;top:105px" width="13" height="15" viewBox="0 0 13 15"><path d="M3 7 V4.5 Q3 1.5 6 1.5 Q9 1.5 9 4.5" fill="none" stroke="#c8c8c8" stroke-width="1.4"/><rect x="1" y="7.5" width="11" height="6.5" fill="none" stroke="#c8c8c8" stroke-width="1.4"/></svg>
<svg style="left:1416px;top:107px" width="4" height="14"><circle cx="2" cy="2" r="1.5" fill="#c8c8c8"/><circle cx="2" cy="7" r="1.5" fill="#c8c8c8"/><circle cx="2" cy="12" r="1.5" fill="#c8c8c8"/></svg>
<svg style="left:869px;top:134px" width="16" height="16"><path d="M8 0 V16 M0 8 H16" stroke="#d0d0d0" stroke-width="1.5"/></svg>
<svg style="left:888px;top:138px" width="10" height="6"><path d="M0 0 H10 L5 6Z" fill="#c8c8c8"/></svg>
<div class="a" style="left:1026px;top:133px;width:403px;height:19px;background:#2a2a2a;border-radius:4px;border:1px solid #232323"></div>
<svg style="left:1031px;top:137px" width="14" height="11" viewBox="0 0 14 11"><circle cx="4" cy="4" r="3" fill="none" stroke="#a8a8a8" stroke-width="1.4"/><path d="M6.5 6.5 L9.5 9.5 M10 4 H13 L11.5 6Z" stroke="#a8a8a8" stroke-width="1.3" fill="#a8a8a8"/></svg>
<div class="t" style="left:1048px;top:136px;font-size:14px;color:#7c7c7c">All</div>
<div class="a" style="left:1409px;top:134px;width:19px;height:17px;background:#333;border-radius:0 3px 3px 0"></div>
<svg style="left:1412px;top:135px" width="15" height="15" viewBox="0 0 15 15"><rect x="1" y="1" width="13" height="13" fill="none" stroke="#b8b8b8" stroke-width="1.2"/><rect x="1" y="8" width="6" height="6" fill="#383838" stroke="#b8b8b8" stroke-width="1.2"/><path d="M6 9 L12 3 M8 3 H12 V7" fill="none" stroke="#b8b8b8" stroke-width="1.3"/></svg>
<div class="a" style="left:861px;top:154px;width:571px;height:20px;background:#2d2d2d"></div>
<div class="a" style="left:861px;top:174px;width:571px;height:1px;background:#424242"></div>
<svg style="left:904px;top:161px" width="11" height="10"><path d="M0.5 0.5 H10.5 L5.5 9.5Z" fill="#808080"/></svg>
<svg style="left:920px;top:156px" width="16" height="18" viewBox="0 0 16 18"><path d="M8 1 L14.5 4.8 V12.8 L8 16.8 L1.5 12.8 V4.8Z" fill="none" stroke="#e8e8e8" stroke-width="2.4" stroke-linejoin="round"/><path d="M8 8.8 V17 M8 8.8 L1.5 5 M8 8.8 L14.5 5" stroke="#e8e8e8" stroke-width="2.4"/><path d="M8 1 V4 M1.5 12.8 L4 11.5 M14.5 12.8 L12 11.5" stroke="#2d2d2d" stroke-width="1.4"/></svg>
<div class="t" style="left:942px;top:157px;font-size:15px;font-weight:bold;color:#e4e4e4">demo_scene_FREE*</div>
<svg style="left:1417px;top:157px" width="4" height="14"><circle cx="2" cy="2" r="1.5" fill="#c8c8c8"/><circle cx="2" cy="7" r="1.5" fill="#c8c8c8"/><circle cx="2" cy="12" r="1.5" fill="#c8c8c8"/></svg>
<div class="a" style="left:901px;top:237px;width:2px;height:19px;background:#2a8ad8"></div>
<div class="a" style="left:862px;top:375px;width:573px;height:19px;background:#2c5d87"></div>
<svg style="left:864px;top:379px" width="20" height="11" viewBox="0 0 20 11"><path d="M1 5.5 Q10 -3 19 5.5 Q10 14 1 5.5Z" fill="none" stroke="#6a8eb0" stroke-width="1.4"/><circle cx="10" cy="5.5" r="2.8" fill="#6a8eb0"/></svg>
<svg style="left:885px;top:377px" width="14" height="15" viewBox="0 0 14 15"><path d="M3 14 L1 8 Q1 6.5 3 7.5 V2 Q4 0.5 5 2 V6 Q7 5 8.5 6.5 Q10.5 6 11.5 7.5 Q13 7.5 13 9.5 V12 L11 14Z" fill="#6a8eb0"/></svg>
<svg style="left:937px;top:176px" width="17" height="18" viewBox="0 0 17 18"><path d="M8.5 1 L15.5 4.8 V13.2 L8.5 17 L1.5 13.2 V4.8Z M1.5 4.8 L8.5 8.6 L15.5 4.8 M8.5 8.6 V17" fill="none" stroke="#c4c4c4" stroke-width="1.3" stroke-linejoin="round"/></svg>
<div class="t" style="left:958px;top:177px;font-size:15.5px;color:#c4c4c4">Main Camera</div>
<svg style="left:922px;top:200px" width="9" height="11"><path d="M0.5 0.5 L8.5 5.5 L0.5 10.5Z" fill="#7a7a7a"/></svg>
<svg style="left:937px;top:196px" width="17" height="18" viewBox="0 0 17 18"><path d="M8.5 1 L15.5 4.8 V13.2 L8.5 17 L1.5 13.2 V4.8Z M1.5 4.8 L8.5 8.6 L15.5 4.8 M8.5 8.6 V17" fill="none" stroke="#c4c4c4" stroke-width="1.3" stroke-linejoin="round"/></svg>
<div class="t" style="left:958px;top:197px;font-size:15.5px;color:#c4c4c4">Grid</div>
<svg style="left:922px;top:220px" width="9" height="11"><path d="M0.5 0.5 L8.5 5.5 L0.5 10.5Z" fill="#7a7a7a"/></svg>
<svg style="left:937px;top:216px" width="17" height="18" viewBox="0 0 17 18"><path d="M8.5 1 L15.5 4.8 V13.2 L8.5 17 L1.5 13.2 V4.8Z M1.5 4.8 L8.5 8.6 L15.5 4.8 M8.5 8.6 V17" fill="none" stroke="#c4c4c4" stroke-width="1.3" stroke-linejoin="round"/></svg>
<div class="t" style="left:958px;top:217px;font-size:15.5px;color:#c4c4c4">Props</div>
<svg style="left:922px;top:240px" width="9" height="11"><path d="M0.5 0.5 L8.5 5.5 L0.5 10.5Z" fill="#7a7a7a"/></svg>
<svg style="left:937px;top:236px" width="17" height="18" viewBox="0 0 17 18"><path d="M8.5 1 L15.5 4.8 L8.5 8.6 L1.5 4.8Z" fill="#8fd6fb"/><path d="M15.5 4.8 L8.5 8.6 V17 L15.5 13.2Z" fill="#5ab8ef"/><path d="M1.5 4.8 L8.5 8.6 V17 L1.5 13.2Z" fill="#888"/><path d="M2 9 L6 6.5 M2 12.5 L8 8.8 M3 15 L8 12" stroke="#2a2a2a" stroke-width="1.3"/></svg>
<div class="t" style="left:958px;top:237px;font-size:15.5px;color:#80abea">Player</div>
<svg style="left:937px;top:256px" width="17" height="18" viewBox="0 0 17 18"><path d="M8.5 1 L15.5 4.8 L8.5 8.6 L1.5 4.8Z" fill="#8fd6fb"/><path d="M1.5 4.8 L8.5 8.6 V17 L1.5 13.2Z" fill="#6cc4f4"/><path d="M15.5 4.8 L8.5 8.6 V17 L15.5 13.2Z" fill="#5ab8ef"/><path d="M8.5 8.6 V17" stroke="#2a3a48" stroke-width="1"/></svg>
<div class="t" style="left:958px;top:257px;font-size:15.5px;color:#80abea">Burger</div>
<svg style="left:937px;top:276px" width="17" height="18" viewBox="0 0 17 18"><path d="M8.5 1 L15.5 4.8 L8.5 8.6 L1.5 4.8Z" fill="#8fd6fb"/><path d="M1.5 4.8 L8.5 8.6 V17 L1.5 13.2Z" fill="#6cc4f4"/><path d="M15.5 4.8 L8.5 8.6 V17 L15.5 13.2Z" fill="#5ab8ef"/><path d="M8.5 8.6 V17" stroke="#2a3a48" stroke-width="1"/></svg>
<div class="t" style="left:958px;top:277px;font-size:15.5px;color:#80abea">Coke</div>
<svg style="left:937px;top:296px" width="17" height="18" viewBox="0 0 17 18"><path d="M8.5 1 L15.5 4.8 L8.5 8.6 L1.5 4.8Z" fill="#8fd6fb"/><path d="M1.5 4.8 L8.5 8.6 V17 L1.5 13.2Z" fill="#6cc4f4"/><path d="M15.5 4.8 L8.5 8.6 V17 L15.5 13.2Z" fill="#5ab8ef"/><path d="M8.5 8.6 V17" stroke="#2a3a48" stroke-width="1"/></svg>
<div class="t" style="left:958px;top:297px;font-size:15.5px;color:#80abea">Coke (1)</div>
<svg style="left:937px;top:316px" width="17" height="18" viewBox="0 0 17 18"><path d="M8.5 1 L15.5 4.8 L8.5 8.6 L1.5 4.8Z" fill="#8fd6fb"/><path d="M1.5 4.8 L8.5 8.6 V17 L1.5 13.2Z" fill="#6cc4f4"/><path d="M15.5 4.8 L8.5 8.6 V17 L15.5 13.2Z" fill="#5ab8ef"/><path d="M8.5 8.6 V17" stroke="#2a3a48" stroke-width="1"/></svg>
<div class="t" style="left:958px;top:317px;font-size:15.5px;color:#80abea">Coke (2)</div>
<svg style="left:922px;top:340px" width="9" height="11"><path d="M0.5 0.5 L8.5 5.5 L0.5 10.5Z" fill="#7a7a7a"/></svg>
<svg style="left:937px;top:336px" width="17" height="18" viewBox="0 0 17 18"><path d="M8.5 1 L15.5 4.8 V13.2 L8.5 17 L1.5 13.2 V4.8Z M1.5 4.8 L8.5 8.6 L15.5 4.8 M8.5 8.6 V17" fill="none" stroke="#c4c4c4" stroke-width="1.3" stroke-linejoin="round"/></svg>
<div class="t" style="left:958px;top:337px;font-size:15.5px;color:#c4c4c4">Inventory</div>
<svg style="left:937px;top:356px" width="17" height="18" viewBox="0 0 17 18"><path d="M8.5 1 L15.5 4.8 V13.2 L8.5 17 L1.5 13.2 V4.8Z M1.5 4.8 L8.5 8.6 L15.5 4.8 M8.5 8.6 V17" fill="none" stroke="#c4c4c4" stroke-width="1.3" stroke-linejoin="round"/></svg>
<div class="t" style="left:958px;top:357px;font-size:15.5px;color:#c4c4c4">EventSystem</div>
<svg style="left:937px;top:376px" width="17" height="18" viewBox="0 0 17 18"><path d="M8.5 1 L15.5 4.8 V13.2 L8.5 17 L1.5 13.2 V4.8Z M1.5 4.8 L8.5 8.6 L15.5 4.8 M8.5 8.6 V17" fill="none" stroke="#d8e4f0" stroke-width="1.3" stroke-linejoin="round"/></svg>
<div class="t" style="left:958px;top:377px;font-size:15.5px;color:#e8e8e8">GameObject</div>
<svg style="left:1421px;top:240px" width="8" height="12"><path d="M1 1 L6.5 6 L1 11" fill="none" stroke="#9a9a9a" stroke-width="1.5"/></svg>
<svg style="left:1421px;top:259px" width="8" height="12"><path d="M1 1 L6.5 6 L1 11" fill="none" stroke="#9a9a9a" stroke-width="1.5"/></svg>
<svg style="left:1421px;top:279px" width="8" height="12"><path d="M1 1 L6.5 6 L1 11" fill="none" stroke="#9a9a9a" stroke-width="1.5"/></svg>
<svg style="left:1421px;top:299px" width="8" height="12"><path d="M1 1 L6.5 6 L1 11" fill="none" stroke="#9a9a9a" stroke-width="1.5"/></svg>
<svg style="left:1421px;top:319px" width="8" height="12"><path d="M1 1 L6.5 6 L1 11" fill="none" stroke="#9a9a9a" stroke-width="1.5"/></svg>


<!-- INSPECTOR -->
<div class="a" style="left:1437px;top:129px;width:481px;height:984px;background:#383838"></div>
<div class="a" style="left:1437px;top:99px;width:135px;height:30px;background:#3c3c3c;border-radius:3px 3px 0 0"></div>
<svg style="left:1450px;top:108px" width="14" height="14" viewBox="0 0 14 14"><circle cx="7" cy="7" r="6.5" fill="#d8d8d8"/><rect x="6" y="5.5" width="2.2" height="6" fill="#3c3c3c"/><circle cx="7.1" cy="3.4" r="1.2" fill="#3c3c3c"/></svg>
<div class="t ltxt" style="left:1469px;top:107px">Inspector</div>
<svg style="left:1875px;top:105px" width="13" height="15" viewBox="0 0 13 15"><path d="M3 7 V4.5 Q3 1.5 6 1.5 Q9 1.5 9 4.5" fill="none" stroke="#c8c8c8" stroke-width="1.4"/><rect x="1" y="7.5" width="11" height="6.5" fill="none" stroke="#c8c8c8" stroke-width="1.4"/></svg>
<svg style="left:1900px;top:107px" width="4" height="14"><circle cx="2" cy="2" r="1.5" fill="#c8c8c8"/><circle cx="2" cy="7" r="1.5" fill="#c8c8c8"/><circle cx="2" cy="12" r="1.5" fill="#c8c8c8"/></svg>
<div class="a" style="left:1437px;top:129px;width:481px;height:74px;background:#3e3e3e"></div>
<div class="a" style="left:1437px;top:203px;width:481px;height:1px;background:#232323"></div>
<div class="a" style="left:1437px;top:204px;width:481px;height:28px;background:#3e3e3e"></div>
<div class="a" style="left:1437px;top:232px;width:481px;height:1px;background:#232323"></div>
<svg style="left:1445px;top:141px" width="27" height="28" viewBox="0 0 27 28"><path d="M13.5 1.5 L25 7.5 V20.5 L13.5 26.5 L2 20.5 V7.5Z M2 7.5 L13.5 13.5 L25 7.5 M13.5 13.5 V26.5" fill="none" stroke="#cfcfcf" stroke-width="1.6" stroke-linejoin="round"/></svg>
<svg style="left:1470px;top:168px" width="10" height="6"><path d="M0 0 H10 L5 6Z" fill="#c8c8c8"/></svg>
<div class="a" style="left:1496px;top:143px;width:17px;height:18px;background:#252525;border-radius:3px"></div>
<svg style="left:1499px;top:147px" width="11" height="10"><path d="M1 5 L4 8 L10 1.5" fill="none" stroke="#e8e8e8" stroke-width="1.8"/></svg>
<div class="a" style="left:1521px;top:141px;width:298px;height:22px;background:#2a2a2a;border-radius:3px"></div>
<div class="t" style="left:1524px;top:145px;font-size:15.5px;font-weight:bold;color:#e2e2e2">GameObject</div>
<div class="a" style="left:1823px;top:143px;width:17px;height:18px;background:#2a2a2a;border-radius:3px"></div>
<div class="t ltxt" style="left:1846px;top:145px">Static</div>
<svg style="left:1901px;top:148px" width="10" height="6"><path d="M0 0 H10 L5 6Z" fill="#c8c8c8"/></svg>
<div class="t" style="left:1488px;top:173px;font-size:15.5px;color:#bdbdbd">Tag</div>
<div class="a" style="left:1521px;top:171px;width:172px;height:21px;background:#515151;border-radius:3px"></div>
<div class="t" style="left:1524px;top:173px;font-size:15.5px;color:#d2d2d2">Untagged</div>
<svg style="left:1675px;top:180px" width="10" height="6"><path d="M0 0 H10 L5 6Z" fill="#c8c8c8"/></svg>
<div class="t" style="left:1708px;top:173px;font-size:15.5px;color:#bdbdbd">Layer</div>
<div class="a" style="left:1754px;top:171px;width:159px;height:21px;background:#515151;border-radius:3px"></div>
<div class="t" style="left:1758px;top:173px;font-size:15.5px;color:#d2d2d2">Default</div>
<svg style="left:1896px;top:180px" width="10" height="6"><path d="M0 0 H10 L5 6Z" fill="#c8c8c8"/></svg>
<svg style="left:1446px;top:213px" width="9" height="11"><path d="M0.5 0.5 L8.5 5.5 L0.5 10.5Z" fill="#7a7a7a"/></svg>
<svg style="left:1464px;top:208px" width="17" height="17" viewBox="0 0 17 17"><path d="M8.5 7.5 V2.5" stroke="#8ad84a" stroke-width="2.6" stroke-linecap="round"/><path d="M6.5 11 L2.5 13.5" stroke="#56b8f0" stroke-width="2.6" stroke-linecap="round"/><path d="M10.5 11 L14.5 13.5" stroke="#f06040" stroke-width="2.6" stroke-linecap="round"/></svg>
<div class="t" style="left:1512px;top:210px;font-size:15.5px;font-weight:bold;color:#e2e2e2">Transform</div>
<svg style="left:1847px;top:211px" width="13" height="13" viewBox="0 0 13 13"><circle cx="6.5" cy="6.5" r="6.3" fill="#d8d8d8"/><path d="M4.3 5 Q4.3 2.8 6.5 2.8 Q8.7 2.8 8.7 4.8 Q8.7 6 7 6.8 V8" fill="none" stroke="#3e3e3e" stroke-width="1.6"/><circle cx="7" cy="10" r="1" fill="#3e3e3e"/></svg>
<svg style="left:1872px;top:211px" width="14" height="13" viewBox="0 0 14 13"><path d="M0 3.5 H14 M0 9.5 H14" stroke="#d0d0d0" stroke-width="1.5"/><rect x="8" y="0.5" width="2.5" height="5" fill="#d0d0d0"/><rect x="4" y="7" width="2.5" height="5" fill="#d0d0d0"/></svg>
<svg style="left:1901px;top:210px" width="4" height="14"><circle cx="2" cy="2" r="1.5" fill="#c8c8c8"/><circle cx="2" cy="7" r="1.5" fill="#c8c8c8"/><circle cx="2" cy="12" r="1.5" fill="#c8c8c8"/></svg>
<div class="a" style="left:1534px;top:244px;width:286px;height:28px;background:#585858;border-radius:3px;border-bottom:1px solid #2a2a2a"></div>
<div class="t" style="left:1534px;top:251px;width:286px;text-align:center;font-size:15.5px;color:#dedede">Add Component</div>
<div class="a" style="left:1437px;top:1072px;width:481px;height:1px;background:#1e1e1e"></div>
<div class="a" style="left:1437px;top:1073px;width:481px;height:31px;background:#3e3e3e"></div>
<div class="a" style="left:1437px;top:1104px;width:481px;height:1px;background:#1e1e1e"></div>
<div class="a" style="left:1437px;top:1105px;width:481px;height:8px;background:#3e3e3e"></div>
<div class="t" style="left:1442px;top:1081px;font-size:15.5px;font-weight:bold;color:#c8c8c8">Asset Labels</div>


<!-- CONSOLE -->
<div class="a" style="left:0;top:716px;width:960px;height:397px;background:#383838"></div>
<div class="a" style="left:0;top:687px;width:125px;height:30px;background:#3c3c3c;border-radius:3px 3px 0 0"></div>
<svg style="left:13px;top:696px" width="12" height="13" viewBox="0 0 12 13"><rect x="0.5" y="0.5" width="11" height="12" fill="#c8c8c8"/><path d="M2.5 3 H9.5 M2.5 6.5 H9.5 M2.5 10 H7" stroke="#3c3c3c" stroke-width="1.3"/></svg>
<div class="t ltxt" style="left:31px;top:695px">Console</div>
<svg style="left:136px;top:697px" width="18" height="11" viewBox="0 0 18 11"><path d="M4 0.5 H14 Q17.5 0.5 17.5 5.5 Q17.5 10.5 14.5 10.5 Q13 10.5 12 8.5 H6 Q5 10.5 3.5 10.5 Q0.5 10.5 0.5 5.5 Q0.5 0.5 4 0.5Z" fill="#d0d0d0"/><path d="M3 5.5 H7 M5 3.5 V7.5" stroke="#191919" stroke-width="1.2"/><circle cx="12.5" cy="4" r="1" fill="#191919"/><circle cx="14.5" cy="6.5" r="1" fill="#191919"/></svg>
<div class="t ltxt" style="left:157px;top:695px">Game</div>
<svg style="left:940px;top:697px" width="4" height="14"><circle cx="2" cy="2" r="1.5" fill="#c8c8c8"/><circle cx="2" cy="7" r="1.5" fill="#c8c8c8"/><circle cx="2" cy="12" r="1.5" fill="#c8c8c8"/></svg>
<div class="a" style="left:0;top:716px;width:960px;height:27px;background:#3c3c3c"></div>
<div class="a" style="left:0;top:742px;width:960px;height:1px;background:#262626"></div>
<div class="a" style="left:1px;top:717px;width:1px;height:25px;background:#2a2a2a"></div>
<div class="a" style="left:49px;top:721px;width:1px;height:17px;background:#2e2e2e"></div>
<div class="a" style="left:70px;top:717px;width:1px;height:25px;background:#2a2a2a"></div>
<div class="a" style="left:144px;top:717px;width:1px;height:25px;background:#2a2a2a"></div>
<div class="a" style="left:238px;top:717px;width:1px;height:25px;background:#2a2a2a"></div>
<div class="a" style="left:304px;top:717px;width:1px;height:25px;background:#2a2a2a"></div>
<div class="t ltxt" style="left:5px;top:722px">Clear</div>
<svg style="left:55px;top:727px" width="10" height="6"><path d="M0 0 H10 L5 6Z" fill="#c8c8c8"/></svg>
<div class="t ltxt" style="left:76px;top:722px">Collapse</div>
<div class="t ltxt" style="left:151px;top:722px">Error Pause</div>
<div class="t ltxt" style="left:244px;top:722px">Editor</div>
<svg style="left:288px;top:727px" width="10" height="6"><path d="M0 0 H10 L5 6Z" fill="#c8c8c8"/></svg>
<div class="a" style="left:452px;top:720px;width:375px;height:20px;background:#2a2a2a;border-radius:4px;border:1px solid #232323"></div>
<svg style="left:457px;top:724px" width="10" height="11" viewBox="0 0 10 11"><circle cx="4" cy="4" r="2.8" fill="none" stroke="#c0c0c0" stroke-width="1.4"/><path d="M6 6.5 L9 10" stroke="#c0c0c0" stroke-width="1.6"/></svg>
<div class="a" style="left:831px;top:717px;width:129px;height:25px;background:#484848"></div>
<div class="a" style="left:872px;top:717px;width:1px;height:25px;background:#383838"></div>
<div class="a" style="left:915px;top:717px;width:1px;height:25px;background:#383838"></div>
<svg style="left:838px;top:722px" width="16" height="16" viewBox="0 0 16 16"><path d="M8 0.5 A7.5 7.5 0 1 0 14 12 L15.5 15.5 L12 14 A7.5 7.5 0 0 0 8 0.5Z" fill="#8a8a8a"/><rect x="7" y="3.5" width="2" height="6" fill="#484848"/><circle cx="8" cy="11.8" r="1.1" fill="#484848"/></svg>
<div class="t" style="left:858px;top:723px;font-size:15.5px;color:#b0b0b0">0</div>
<svg style="left:881px;top:722px" width="16" height="15" viewBox="0 0 16 15"><path d="M8 0.5 L15.5 14.5 H0.5Z" fill="#8a8a8a"/><rect x="7" y="5" width="2" height="5" fill="#484848"/><circle cx="8" cy="12" r="1" fill="#484848"/></svg>
<div class="t" style="left:901px;top:723px;font-size:15.5px;color:#b0b0b0">0</div>
<svg style="left:922px;top:722px" width="16" height="16" viewBox="0 0 16 16"><path d="M4.7 0.5 H11.3 L15.5 4.7 V11.3 L11.3 15.5 H4.7 L0.5 11.3 V4.7Z" fill="#d0d0d0"/><rect x="7" y="3.5" width="2" height="6" fill="#484848"/><circle cx="8" cy="12" r="1.1" fill="#484848"/></svg>
<div class="t" style="left:942px;top:723px;font-size:15.5px;color:#b0b0b0">0</div>
<div class="a" style="left:0;top:1001px;width:960px;height:1px;background:#2a2a2a"></div>

<!-- PROJECT PANEL (partially visible) -->
<div class="a" style="left:962px;top:716px;width:473px;height:397px;background:#383838"></div>
<div class="a" style="left:961px;top:687px;width:130px;height:30px;background:#3c3c3c;border-radius:3px 3px 0 0"></div>
<svg style="left:972px;top:696px" width="14" height="12" viewBox="0 0 14 12"><path d="M0.5 0.5 H5 L6.5 2.5 H13.5 V11.5 H0.5Z" fill="#d0d0d0"/></svg>
<div class="t ltxt" style="left:991px;top:695px">Project</div>
<div class="a" style="left:961px;top:716px;width:475px;height:27px;background:#3c3c3c"></div>
<svg style="left:968px;top:724px" width="15" height="15"><path d="M7.5 0 V15 M0 7.5 H15" stroke="#d0d0d0" stroke-width="1.5"/></svg>
<svg style="left:988px;top:729px" width="10" height="6"><path d="M0 0 H10 L5 6Z" fill="#c8c8c8"/></svg>
<div class="a" style="left:961px;top:742px;width:475px;height:1px;background:#262626"></div>
<svg style="left:966px;top:748px" width="10" height="9"><path d="M0.5 0.5 H9.5 L5 8.5Z" fill="#7a7a7a"/></svg>
<svg style="left:984px;top:745px" width="15" height="15" viewBox="0 0 15 15"><path d="M7.5 0.5 L9.6 5 L14.5 5.5 L10.8 8.8 L11.9 14 L7.5 11.4 L3.1 14 L4.2 8.8 L0.5 5.5 L5.4 5Z" fill="#d0d0d0"/></svg>
<svg style="left:966px;top:848px" width="10" height="9"><path d="M0.5 0.5 H9.5 L5 8.5Z" fill="#7a7a7a"/></svg>
<svg style="left:983px;top:845px" width="17" height="13" viewBox="0 0 17 13"><path d="M0.5 12.5 V0.5 H5 L6.5 2.5 H13 V4.5" fill="none" stroke="#d0d0d0" stroke-width="1.2"/><path d="M0.5 12.5 L3 5 H16.5 L13.5 12.5Z" fill="#d0d0d0"/></svg>
<div class="a" style="left:961px;top:941px;width:475px;height:21px;background:#4d4d4d"></div>
<svg style="left:985px;top:867px" width="9" height="10"><path d="M0.5 0.5 L8.5 5 L0.5 9.5Z" fill="#7a7a7a"/></svg>
<svg style="left:985px;top:966px" width="9" height="10"><path d="M0.5 0.5 L8.5 5 L0.5 9.5Z" fill="#7a7a7a"/></svg>
<svg style="left:985px;top:986px" width="9" height="10"><path d="M0.5 0.5 L8.5 5 L0.5 9.5Z" fill="#7a7a7a"/></svg>
<svg style="left:967px;top:1006px" width="9" height="10"><path d="M0.5 0.5 L8.5 5 L0.5 9.5Z" fill="#7a7a7a"/></svg>
<svg style="left:984px;top:1005px" width="16" height="12" viewBox="0 0 16 12"><path d="M0.5 0.5 H5.5 L7 2.5 H15.5 V11.5 H0.5Z" fill="#d0d0d0"/></svg>

<svg style="left:1000px;top:766px" width="4" height="10"><path d="M3.5 0.8 Q1 1.5 1 5 Q1 8.5 3.5 9.2" fill="none" stroke="#9a9a9a" stroke-width="1.2"/></svg>
<svg style="left:1000px;top:786px" width="4" height="10"><path d="M3.5 0.8 Q1 1.5 1 5 Q1 8.5 3.5 9.2" fill="none" stroke="#9a9a9a" stroke-width="1.2"/></svg>
<svg style="left:1000px;top:806px" width="4" height="10"><path d="M3.5 0.8 Q1 1.5 1 5 Q1 8.5 3.5 9.2" fill="none" stroke="#9a9a9a" stroke-width="1.2"/></svg>
<div class="a" style="left:1000px;top:866px;width:3px;height:12px;background:#d0d0d0"></div>
<div class="a" style="left:1000px;top:885px;width:3px;height:12px;background:#d0d0d0"></div>
<div class="a" style="left:1000px;top:905px;width:3px;height:12px;background:#d0d0d0"></div>
<div class="a" style="left:1000px;top:925px;width:3px;height:12px;background:#d0d0d0"></div>
<div class="a" style="left:1000px;top:945px;width:3px;height:12px;background:#d0d0d0"></div>
<div class="a" style="left:1000px;top:965px;width:3px;height:12px;background:#d0d0d0"></div>
<div class="a" style="left:1000px;top:985px;width:3px;height:12px;background:#d0d0d0"></div>
<div class="a" style="left:962px;top:1086px;width:473px;height:27px;background:#3d3d3d;border-top:1px solid #2e2e2e"></div>
<div class="a" style="left:1410px;top:1099px;width:6px;height:2px;background:#8a8a8a"></div>
<!-- STATUS BAR -->
<div class="a" style="left:0;top:1113px;width:1918px;height:24px;background:#151515"></div>
<div class="a" style="left:1821px;top:1113px;width:1px;height:24px;background:#2a2a2a"></div>
<div class="a" style="left:1854px;top:1113px;width:1px;height:24px;background:#2a2a2a"></div>
<div class="a" style="left:1887px;top:1113px;width:1px;height:24px;background:#2a2a2a"></div>
<svg style="left:1828px;top:1118px" width="18" height="19" viewBox="0 0 18 19"><ellipse cx="9" cy="11" rx="5" ry="6.5" fill="#c8c8c8"/><circle cx="9" cy="4" r="2.5" fill="#c8c8c8"/><path d="M1 7 L4 9 M1 12 H4 M2 17 L5 14 M17 7 L14 9 M17 12 H14 M16 17 L13 14" stroke="#c8c8c8" stroke-width="1.3"/><path d="M2 2 L17 18" stroke="#191919" stroke-width="2.5"/><path d="M2 2 L17 18" stroke="#c8c8c8" stroke-width="1.2"/></svg>
<svg style="left:1862px;top:1118px" width="18" height="19" viewBox="0 0 18 19"><ellipse cx="9" cy="3.5" rx="7" ry="3" fill="#c8c8c8"/><path d="M2 6 Q9 10 16 6 V9 Q9 13 2 9Z M2 11 Q9 15 16 11 V14 Q9 18 2 14Z" fill="#c8c8c8"/><path d="M1 1 L17 18" stroke="#191919" stroke-width="2.5"/><path d="M1 1 L17 18" stroke="#c8c8c8" stroke-width="1.2"/></svg>
<svg style="left:1893px;top:1118px" width="18" height="18" viewBox="0 0 18 18"><circle cx="9" cy="9" r="8" fill="none" stroke="#c8c8c8" stroke-width="1.4"/><path d="M5 9 L8 12 L13 6" fill="none" stroke="#c8c8c8" stroke-width="1.6"/></svg>


<!-- CONTEXT MENU -->
<div class="a" style="left:1003px;top:210px;width:406px;height:940px;background:#f9f9f9;border-radius:7px;box-shadow:0 2px 8px rgba(0,0,0,0.35)"></div>
<div class="a" style="left:1011px;top:685px;width:390px;height:25px;background:#f0f0f0;border-radius:4px"></div>
<div class="cm" style="left:1048px;top:218px">Cut</div>
<div class="sc" style="right:541px;top:218px">Ctrl+X</div>
<div class="cm" style="left:1048px;top:244px">Copy</div>
<div class="sc" style="right:541px;top:244px">Ctrl+C</div>
<div class="cm cmd" style="left:1048px;top:270px">Paste</div>
<div class="sc cmd" style="right:541px;top:270px">Ctrl+V</div>
<div class="cm cmd" style="left:1048px;top:296px">Paste Special</div>
<div class="cm" style="left:1048px;top:322px">Rename</div>
<div class="cm" style="left:1048px;top:348px">Duplicate</div>
<div class="sc" style="right:541px;top:348px">Ctrl+D</div>
<div class="cm" style="left:1048px;top:374px">Delete</div>
<div class="sc" style="right:541px;top:374px">Del</div>
<div class="sep" style="left:1013px;top:400px;width:385px"></div>
<div class="cm" style="left:1048px;top:411px">Select All</div>
<div class="cm" style="left:1048px;top:437px">Deselect All</div>
<div class="cm" style="left:1048px;top:463px">Invert Selection</div>
<div class="cm cmd" style="left:1048px;top:489px">Select Children</div>
<div class="sep" style="left:1013px;top:515px;width:385px"></div>
<div class="cm" style="left:1048px;top:526px">Find References in Scene</div>
<div class="sep" style="left:1013px;top:552px;width:385px"></div>
<div class="cm" style="left:1048px;top:563px">Set as Default Parent</div>
<div class="sep" style="left:1013px;top:589px;width:385px"></div>
<div class="cm" style="left:1048px;top:600px">Prefab</div>
<svg style="left:1383px;top:602px" width="8" height="12"><path d="M1.5 1 L6.5 6 L1.5 11" fill="none" stroke="#1a1a1a" stroke-width="1.3"/></svg>
<div class="sep" style="left:1013px;top:626px;width:385px"></div>
<div class="cm" style="left:1048px;top:637px">Create Empty</div>
<div class="sc" style="right:541px;top:637px">Ctrl+Shift+N</div>
<div class="cm" style="left:1048px;top:663px">Create Empty Parent</div>
<div class="sc" style="right:541px;top:663px">Ctrl+Shift+G</div>
<div class="cm" style="left:1048px;top:689px">2D Object</div>
<div class="cm" style="left:1048px;top:715px">3D Object</div>
<div class="cm" style="left:1048px;top:741px">Effects</div>
<div class="cm" style="left:1048px;top:767px">Light</div>
<div class="cm" style="left:1048px;top:793px">Audio</div>
<div class="cm" style="left:1048px;top:819px">Video</div>
<div class="cm" style="left:1048px;top:845px">UI</div>
<div class="cm" style="left:1048px;top:871px">UI Toolkit</div>
<div class="cm" style="left:1048px;top:897px">Rendering</div>
<svg style="left:1383px;top:899px" width="8" height="12"><path d="M1.5 1 L6.5 6 L1.5 11" fill="none" stroke="#1a1a1a" stroke-width="1.3"/></svg>
<div class="cm" style="left:1048px;top:923px">Volume</div>
<svg style="left:1383px;top:925px" width="8" height="12"><path d="M1.5 1 L6.5 6 L1.5 11" fill="none" stroke="#1a1a1a" stroke-width="1.3"/></svg>
<div class="cm" style="left:1048px;top:949px">Camera</div>
<div class="cm" style="left:1048px;top:975px">Visual Scripting Scene Variables</div>
<div class="cm" style="left:1048px;top:1001px">Move To View</div>
<div class="sc" style="right:541px;top:1001px">Ctrl+Alt+F</div>
<div class="cm" style="left:1048px;top:1027px">Align With View</div>
<div class="sc" style="right:541px;top:1027px">Ctrl+Shift+F</div>
<div class="cm" style="left:1048px;top:1053px">Align View to Selected</div>
<div class="cm" style="left:1048px;top:1079px">Toggle Active State</div>
<div class="sc" style="right:541px;top:1079px">Alt+Shift+A</div>
<div class="sep" style="left:1013px;top:1105px;width:385px"></div>
<div class="cm" style="left:1048px;top:1116px">Properties...</div>
<div class="a" style="left:1167px;top:682px;width:238px;height:211px;background:#f9f9f9;border-radius:7px;box-shadow:0 4px 12px rgba(0,0,0,0.22)"></div>
<div class="a" style="left:1174px;top:711px;width:224px;height:25px;background:#f0f0f0;border-radius:4px"></div>
<div class="cm" style="left:1211px;top:689px">Triangle</div>
<div class="cm" style="left:1211px;top:715px">Square</div>
<div class="cm" style="left:1211px;top:741px">Circle</div>
<div class="cm" style="left:1211px;top:767px">Capsule</div>
<div class="cm" style="left:1211px;top:793px">Isometric Diamond</div>
<div class="cm" style="left:1211px;top:819px">Hexagon Flat Top</div>
<div class="cm" style="left:1211px;top:845px">Hexagon Point Top</div>
<div class="cm" style="left:1211px;top:871px">9-Sliced</div>
<div class="a" style="left:1408px;top:681px;width:284px;height:162px;background:#f9f9f9;border-radius:7px;box-shadow:0 4px 12px rgba(0,0,0,0.22)"></div>
<div class="a" style="left:1411px;top:684px;width:274px;height:25px;background:#f0f0f0;border-radius:4px"></div>
<div class="cm" style="left:1448px;top:689px">Sprites</div>
<svg style="left:1666px;top:691px" width="8" height="12"><path d="M1.5 1 L6.5 6 L1.5 11" fill="none" stroke="#1a1a1a" stroke-width="1.3"/></svg>
<div class="cm" style="left:1448px;top:715px">Physics</div>
<svg style="left:1666px;top:717px" width="8" height="12"><path d="M1.5 1 L6.5 6 L1.5 11" fill="none" stroke="#1a1a1a" stroke-width="1.3"/></svg>
<div class="cm" style="left:1448px;top:741px">Tilemap</div>
<svg style="left:1666px;top:743px" width="8" height="12"><path d="M1.5 1 L6.5 6 L1.5 11" fill="none" stroke="#1a1a1a" stroke-width="1.3"/></svg>
<div class="cm" style="left:1448px;top:767px">Sprite Shape</div>
<svg style="left:1666px;top:769px" width="8" height="12"><path d="M1.5 1 L6.5 6 L1.5 11" fill="none" stroke="#1a1a1a" stroke-width="1.3"/></svg>
<div class="cm" style="left:1448px;top:793px">Pixel Perfect Camera (URP)</div>
<div class="cm" style="left:1448px;top:819px">Sprite Mask</div>
<svg style="left:0;top:0" width="1918" height="1137">
<defs><marker id="ah" markerWidth="10" markerHeight="7" refX="9" refY="3.5" orient="auto" markerUnits="userSpaceOnUse"><path d="M0 0 L10 3.5 L0 7Z" fill="#000"/></marker>
<marker id="ahw" markerWidth="10" markerHeight="7" refX="9" refY="3.5" orient="auto" markerUnits="userSpaceOnUse"><path d="M0 0 L10 3.5 L0 7Z" fill="#fff"/></marker></defs>
<line x1="859" y1="529" x2="935" y2="394" stroke="#fff" stroke-width="1.3" marker-end="url(#ahw)"/>
<line x1="855" y1="519" x2="1044" y2="694" stroke="#000" stroke-width="1.3" marker-end="url(#ah)"/>
<line x1="916" y1="976" x2="1211" y2="724" stroke="#000" stroke-width="1.3" marker-end="url(#ah)"/>
<line x1="1771" y1="980" x2="1508" y2="696" stroke="#000" stroke-width="1.3" marker-end="url(#ah)"/>
</svg>

<!-- PANELS placeholder -->
<div id="panels"></div>

</body></html>
